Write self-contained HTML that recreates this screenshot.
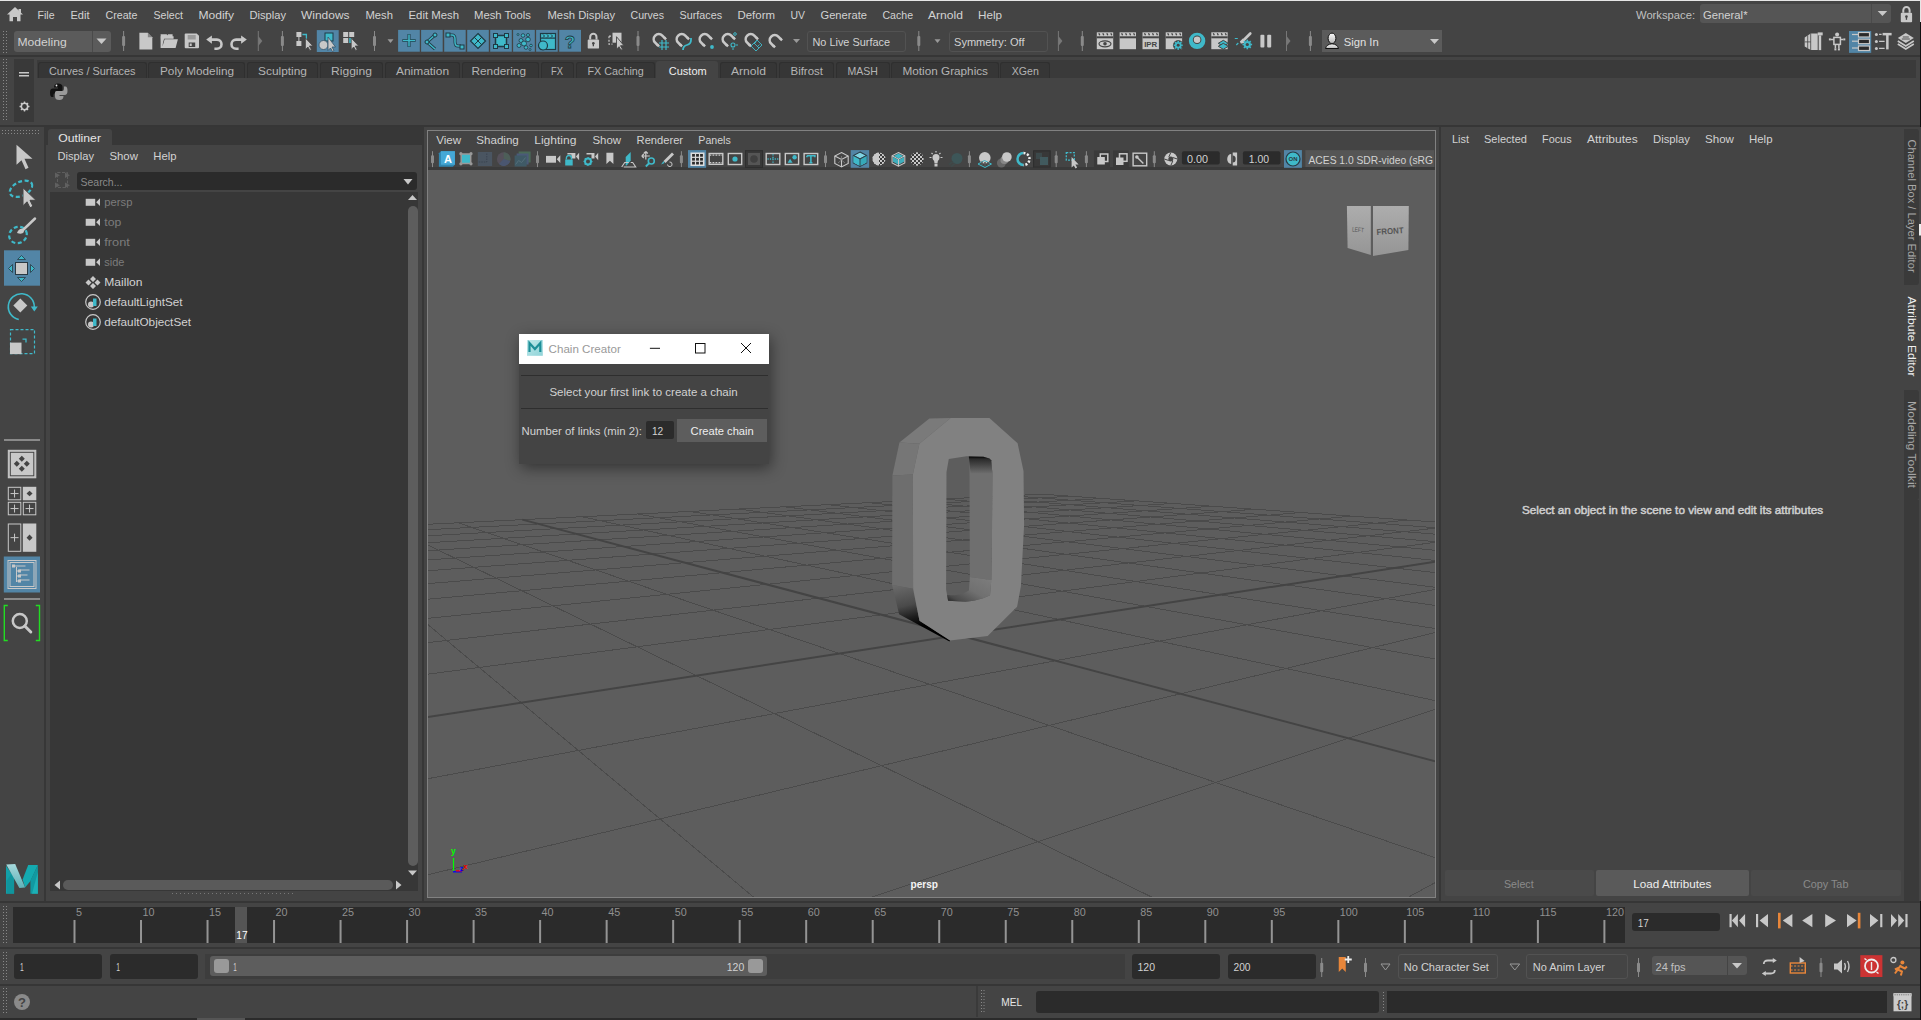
<!DOCTYPE html>
<html><head><meta charset="utf-8"><title>Maya</title>
<style>
html,body{margin:0;padding:0;}
body{width:1921px;height:1020px;overflow:hidden;background:#444;position:relative;font-family:"Liberation Sans",sans-serif;}
#bg>div{position:absolute;}
svg{position:absolute;left:0;top:0;}
svg text{font-family:"Liberation Sans",sans-serif;white-space:pre;}
</style></head><body>
<div id="bg">
<div style="left:0px;top:0px;width:1921px;height:1px;background:#e6e6e6;"></div>
<div style="left:0px;top:55px;width:1921px;height:2px;background:#363636;"></div>
<div style="left:0px;top:125px;width:1921px;height:2px;background:#363636;"></div>
<div style="left:44px;top:127px;width:2px;height:774px;background:#373737;"></div>
<div style="left:46px;top:127px;width:376px;height:18px;background:#373737;"></div>
<div style="left:48px;top:129px;width:64px;height:16px;background:#444444;border-radius:3px 3px 0 0"></div>
<div style="left:422px;top:127px;width:2px;height:774px;background:#373737;"></div>
<div style="left:1439px;top:127px;width:2px;height:774px;background:#373737;"></div>
<div style="left:0px;top:901px;width:1921px;height:2px;background:#363636;"></div>
<div style="left:0px;top:947px;width:1921px;height:2px;background:#363636;"></div>
<div style="left:0px;top:984px;width:1921px;height:2px;background:#363636;"></div>
<div style="left:0px;top:1018px;width:1921px;height:903px;background:#2b2b2b;"></div>
<div style="left:197px;top:1018px;width:48px;height:2px;background:#555555;"></div>
<div style="left:1920px;top:22px;width:1px;height:202px;background:#111;"></div>
<div style="left:1920px;top:236px;width:1px;height:509px;background:#3a3a3a;"></div>
<div style="left:1920px;top:745px;width:1px;height:275px;background:#111;"></div>
<div style="left:1920px;top:0px;width:1px;height:22px;background:#e6e6e6;"></div>
<div style="left:77px;top:172px;width:340px;height:18px;background:#2b2b2b;border-radius:3px"></div>
<div style="left:50px;top:192px;width:368px;height:699px;background:#373737;"></div>
<div style="left:408px;top:206px;width:10px;height:660px;background:#5d5d5d;border-radius:5px"></div>
<div style="left:427px;top:130px;width:1009px;height:768px;background:#818181;"></div>
<div style="left:428px;top:131px;width:1007px;height:766px;background:#444444;"></div>
<div style="left:428px;top:167px;width:1007px;height:3px;background:#3a3a3a;"></div>
<div style="left:428px;top:170px;width:1007px;height:727px;background:#5d5d5d;"></div>
<div style="left:14px;top:59px;width:20px;height:63px;background:#393939;"></div>
<div style="left:37px;top:60px;width:1879px;height:18px;background:#3a3a3a;"></div>
<div style="left:13px;top:907px;width:1612px;height:36px;background:#2b2b2b;"></div>
<div style="left:235px;top:907px;width:12px;height:36px;background:#555555;"></div>
<div style="left:1632px;top:913px;width:88px;height:18px;background:#2b2b2b;border-radius:3px"></div>
<div style="left:14px;top:954px;width:88px;height:25px;background:#2b2b2b;border-radius:3px"></div>
<div style="left:110px;top:954px;width:88px;height:25px;background:#2b2b2b;border-radius:3px"></div>
<div style="left:205px;top:954px;width:920px;height:25px;background:#3d3d3d;"></div>
<div style="left:210px;top:956px;width:557px;height:20px;background:#5d5d5d;border-radius:3px"></div>
<div style="left:214px;top:959px;width:15px;height:14px;background:#999999;border-radius:3px"></div>
<div style="left:748px;top:959px;width:15px;height:14px;background:#999999;border-radius:3px"></div>
<div style="left:1132px;top:954px;width:88px;height:25px;background:#2b2b2b;border-radius:3px"></div>
<div style="left:1228px;top:954px;width:88px;height:25px;background:#2b2b2b;border-radius:3px"></div>
<div style="left:1398px;top:954px;width:100px;height:25px;background:#444;border:1px solid #525252;border-radius:3px;box-sizing:border-box"></div>
<div style="left:1526px;top:954px;width:102px;height:25px;background:#444;border:1px solid #525252;border-radius:3px;box-sizing:border-box"></div>
<div style="left:1652px;top:956px;width:95px;height:19px;background:#555555;border-radius:3px"></div>
<div style="left:1727px;top:956px;width:1px;height:19px;background:#444;"></div>
<div style="left:976px;top:986px;width:2px;height:31px;background:#3a3a3a;"></div>
<div style="left:1036px;top:991px;width:343px;height:22px;background:#2b2b2b;border-radius:3px"></div>
<div style="left:1387px;top:991px;width:500px;height:22px;background:#2b2b2b;"></div>
<div style="left:1445px;top:870px;width:149px;height:26px;background:#4a4a4a;border-radius:2px"></div>
<div style="left:1596px;top:870px;width:153px;height:26px;background:#5a5a5a;border-radius:2px"></div>
<div style="left:1751px;top:870px;width:150px;height:26px;background:#4a4a4a;border-radius:2px"></div>
<div style="left:1904px;top:127px;width:17px;height:774px;background:#444444;"></div>
<div style="left:1904px;top:129px;width:15px;height:156px;background:#3a3a3a;border-radius:0 3px 3px 0"></div>
<div style="left:1904px;top:390px;width:15px;height:110px;background:#3a3a3a;border-radius:0 3px 3px 0"></div>
<div style="left:1904px;top:500px;width:15px;height:401px;background:#3a3a3a;"></div>
<div style="left:14px;top:31px;width:97px;height:21px;background:#5b5b5b;border-radius:3px"></div>
<div style="left:92px;top:31px;width:1px;height:21px;background:#4a4a4a;"></div>
<div style="left:807px;top:31px;width:99px;height:21px;background:#444;border:1px solid #525252;border-radius:3px;box-sizing:border-box"></div>
<div style="left:949px;top:31px;width:99px;height:21px;background:#444;border:1px solid #525252;border-radius:3px;box-sizing:border-box"></div>
<div style="left:1322px;top:30px;width:120px;height:22px;background:#5b5b5b;"></div>
<div style="left:1700px;top:4px;width:191px;height:19px;background:#555555;border-radius:3px"></div>
<div style="left:1871px;top:4px;width:1px;height:19px;background:#4a4a4a;"></div>
<div style="left:37.5px;top:62px;width:109.5px;height:16px;background:#363636;border:1px solid #2f2f2f;border-bottom:none;border-radius:3px 3px 0 0;box-sizing:border-box"></div>
<div style="left:148px;top:62px;width:97px;height:16px;background:#363636;border:1px solid #2f2f2f;border-bottom:none;border-radius:3px 3px 0 0;box-sizing:border-box"></div>
<div style="left:247px;top:62px;width:71px;height:16px;background:#363636;border:1px solid #2f2f2f;border-bottom:none;border-radius:3px 3px 0 0;box-sizing:border-box"></div>
<div style="left:320px;top:62px;width:63px;height:16px;background:#363636;border:1px solid #2f2f2f;border-bottom:none;border-radius:3px 3px 0 0;box-sizing:border-box"></div>
<div style="left:385px;top:62px;width:75px;height:16px;background:#363636;border:1px solid #2f2f2f;border-bottom:none;border-radius:3px 3px 0 0;box-sizing:border-box"></div>
<div style="left:462px;top:62px;width:77px;height:16px;background:#363636;border:1px solid #2f2f2f;border-bottom:none;border-radius:3px 3px 0 0;box-sizing:border-box"></div>
<div style="left:541px;top:62px;width:33px;height:16px;background:#363636;border:1px solid #2f2f2f;border-bottom:none;border-radius:3px 3px 0 0;box-sizing:border-box"></div>
<div style="left:576px;top:62px;width:79px;height:16px;background:#363636;border:1px solid #2f2f2f;border-bottom:none;border-radius:3px 3px 0 0;box-sizing:border-box"></div>
<div style="left:656px;top:61px;width:62px;height:17px;background:#444;border-radius:3px 3px 0 0"></div>
<div style="left:720px;top:62px;width:57px;height:16px;background:#363636;border:1px solid #2f2f2f;border-bottom:none;border-radius:3px 3px 0 0;box-sizing:border-box"></div>
<div style="left:779px;top:62px;width:55px;height:16px;background:#363636;border:1px solid #2f2f2f;border-bottom:none;border-radius:3px 3px 0 0;box-sizing:border-box"></div>
<div style="left:836px;top:62px;width:54px;height:16px;background:#363636;border:1px solid #2f2f2f;border-bottom:none;border-radius:3px 3px 0 0;box-sizing:border-box"></div>
<div style="left:891px;top:62px;width:108px;height:16px;background:#363636;border:1px solid #2f2f2f;border-bottom:none;border-radius:3px 3px 0 0;box-sizing:border-box"></div>
<div style="left:1000px;top:62px;width:50px;height:16px;background:#363636;border:1px solid #2f2f2f;border-bottom:none;border-radius:3px 3px 0 0;box-sizing:border-box"></div>
<div style="left:4px;top:439px;width:36px;height:2px;background:#8a8a8a;"></div>
<div style="left:4px;top:598px;width:36px;height:2px;background:#8a8a8a;"></div>
</div>
<svg width="1921" height="1020" viewBox="0 0 1921 1020" style="left:0;top:0">
<defs><clipPath id="vp"><rect x="428" y="170" width="1007" height="727"/></clipPath></defs>
<g clip-path="url(#vp)">
<g stroke="#4b4b4b" stroke-width="1" shape-rendering="crispEdges"><line x1="-773.08" y1="583.12" x2="-185562.51" y2="28774.00"/><line x1="-773.08" y1="583.12" x2="1042.15" y2="494.17"/><line x1="-595.64" y1="574.42" x2="-161159.01" y2="28774.00"/><line x1="-862.12" y1="596.70" x2="1071.42" y2="496.25"/><line x1="-437.83" y1="566.69" x2="-136755.51" y2="28774.00"/><line x1="-969.09" y1="613.02" x2="1102.80" y2="498.47"/><line x1="-296.55" y1="559.77" x2="-112352.00" y2="28774.00"/><line x1="-1099.99" y1="632.99" x2="1136.53" y2="500.86"/><line x1="-169.33" y1="553.53" x2="-87948.50" y2="28774.00"/><line x1="-1263.89" y1="657.99" x2="1172.88" y2="503.44"/><line x1="-54.18" y1="547.89" x2="-63545.00" y2="28774.00"/><line x1="-1475.04" y1="690.21" x2="1212.17" y2="506.22"/><line x1="50.54" y1="542.76" x2="-39141.50" y2="28774.00"/><line x1="-1757.33" y1="733.27" x2="1254.77" y2="509.24"/><line x1="146.19" y1="538.07" x2="-14738.00" y2="28774.00"/><line x1="-2153.98" y1="793.78" x2="1301.11" y2="512.53"/><line x1="233.90" y1="533.78" x2="9665.50" y2="28774.00"/><line x1="-2752.16" y1="885.04" x2="1351.72" y2="516.11"/><line x1="314.62" y1="529.82" x2="34069.00" y2="28774.00"/><line x1="-3757.75" y1="1038.45" x2="1407.21" y2="520.04"/><line x1="389.15" y1="526.17" x2="58472.50" y2="28774.00"/><line x1="-5801.89" y1="1350.30" x2="1468.31" y2="524.37"/><line x1="458.18" y1="522.79" x2="82876.00" y2="28774.00"/><line x1="-12211.44" y1="2328.12" x2="1535.94" y2="529.17"/><line x1="581.99" y1="516.72" x2="131683.00" y2="28774.00"/><line x1="-148524.72" y1="28774.00" x2="1695.43" y2="540.47"/><line x1="637.73" y1="513.99" x2="156086.50" y2="28774.00"/><line x1="-115633.18" y1="28774.00" x2="1790.37" y2="547.20"/><line x1="689.88" y1="511.43" x2="180490.00" y2="28774.00"/><line x1="-82741.65" y1="28774.00" x2="1898.19" y2="554.84"/><line x1="738.78" y1="509.04" x2="204893.50" y2="28774.00"/><line x1="-49850.11" y1="28774.00" x2="2021.70" y2="563.59"/><line x1="784.72" y1="506.79" x2="26290.87" y2="3661.93"/><line x1="-16958.58" y1="28774.00" x2="2164.60" y2="573.71"/><line x1="827.97" y1="504.67" x2="12484.13" y2="1807.74"/><line x1="15932.96" y1="28774.00" x2="2331.84" y2="585.57"/><line x1="868.75" y1="502.67" x2="8753.13" y2="1306.69"/><line x1="48824.50" y1="28774.00" x2="2530.20" y2="599.62"/><line x1="907.27" y1="500.78" x2="7017.00" y2="1073.53"/><line x1="81716.03" y1="28774.00" x2="2769.29" y2="616.56"/><line x1="943.72" y1="499.00" x2="6013.32" y2="938.74"/><line x1="114607.57" y1="28774.00" x2="3063.07" y2="637.38"/><line x1="978.25" y1="497.30" x2="5359.32" y2="850.91"/><line x1="147499.10" y1="28774.00" x2="3432.73" y2="663.58"/><line x1="1011.02" y1="495.70" x2="4899.37" y2="789.14"/><line x1="180390.64" y1="28774.00" x2="3912.04" y2="697.54"/><line x1="1042.15" y1="494.17" x2="4558.26" y2="743.34"/><line x1="213282.17" y1="28774.00" x2="4558.26" y2="743.34"/></g>
<g stroke="#444444" stroke-width="2"><line x1="522.29" y1="519.65" x2="107279.50" y2="28774.00"/><line x1="-181416.26" y1="28774.00" x2="1611.19" y2="534.50"/></g>
<defs>
<linearGradient id="gShadow" x1="0" y1="0" x2="0.25" y2="1">
 <stop offset="0" stop-color="#6c6c6c"/><stop offset="0.4" stop-color="#4a4a4a"/><stop offset="0.62" stop-color="#1c1c1c"/><stop offset="0.8" stop-color="#000"/><stop offset="1" stop-color="#000"/></linearGradient>
<linearGradient id="gTopIn" x1="0" y1="0" x2="0" y2="1">
 <stop offset="0" stop-color="#000"/><stop offset="0.15" stop-color="#2a2a2a"/><stop offset="1" stop-color="#6c6c6c"/></linearGradient>
<linearGradient id="gBotIn" x1="1" y1="0" x2="0" y2="1">
 <stop offset="0" stop-color="#7e7e7e"/><stop offset="0.5" stop-color="#707070"/><stop offset="0.85" stop-color="#4a4a4a"/><stop offset="1" stop-color="#222"/></linearGradient>
</defs>
<polygon points="929.4,418.5 950.6,417.9 919.4,443.8 899.4,442.6" fill="#7a7a7a" />
<polygon points="899.4,442.6 919.4,443.8 912.9,474.4 892.4,475.6" fill="#767676" />
<polygon points="892.4,475.6 912.9,474.4 913.1,588.8 892.1,585.0" fill="#6e6e6e" />
<polygon points="892.1,585.0 913.1,588.8 919.5,620.7 950.1,640.5 949.5,641.5 899.1,614.3" fill="url(#gShadow)" />
<path d="M950.6,417.9 L989.4,417.9 L1017.6,443.2 L1023.5,470.9 L1024.1,525.0 L1020.9,586.3 L1017.1,606.7 L987.7,636.0 L950.1,640.5 L919.5,620.7 L913.1,588.8 L912.9,474.4 L919.4,443.8 Z M948.8,459.1 L966.5,456.2 L983.5,456.8 L989.4,458.5 L991.2,460.3 L992.4,473.2 L991.7,560.0 L991.0,583.5 L990.0,595.3 L983.1,598.2 L973.8,600.7 L965.5,601.7 L948.1,600.7 L947.1,595.3 L946.1,589.4 L946.5,472.0 Z" fill="#818181" fill-rule="evenodd"/>
<polygon points="969.4,458.5 989.4,458.5 991.2,460.3 992.4,473.2 991.7,580.1 969.9,576.9" fill="#6f6f6f" />
<polygon points="968.8,456.4 983.5,456.8 989.4,458.5 991.2,460.3 992.4,473.2 970.6,473.2" fill="url(#gTopIn)" />
<polygon points="969.9,576.9 991.7,580.1 991.0,583.5 990.0,595.3 983.1,598.2 973.8,600.7 965.5,601.7 948.1,600.7 947.1,595.3 954.7,595.3 963.0,593.8 968.9,590.4" fill="url(#gBotIn)" />
</g>
<defs><linearGradient id="vc2" x1="0" y1="0" x2="0" y2="1"><stop offset="0" stop-color="#adadad"/><stop offset="1" stop-color="#959595"/></linearGradient></defs>
<path d="M1346.9,206.1 L1370.8,206.1 L1370.8,255.1 L1347.6,248Z" fill="url(#vc2)"/><path d="M1373,206.1 L1408.8,206.1 L1408.4,250 L1373,255.9Z" fill="url(#vc2)"/>
<text x="1352" y="232" font-size="6.5" fill="#555" transform="rotate(4 1358 230)" textLength="12" lengthAdjust="spacingAndGlyphs">LEFT</text>
<text x="1376.5" y="234" font-size="8.5" font-weight="bold" fill="#555" transform="rotate(-4 1390 231)" textLength="27" lengthAdjust="spacingAndGlyphs">FRONT</text>
<path d="M453.5,858 V870.8" stroke="#00ff00" stroke-width="1.2"/><path d="M453,871.8 H462" stroke="#0000ff" stroke-width="1.3"/><path d="M456,870.9 H461.5 L463.5,869.5" stroke="#ff0000" stroke-width="1.1" fill="none"/><text x="451" y="854" font-size="8.5" font-weight="bold" fill="#00ff00">y</text><text x="459.8" y="870.8" font-size="7" font-weight="bold" fill="#0000ff">z</text><text x="463.3" y="869.3" font-size="7.5" font-weight="bold" fill="#ff0000">x</text>
</svg>
<div style="position:absolute;left:519px;top:334px;width:250px;height:130px;background:#444;box-shadow:2px 4px 14px rgba(0,0,0,0.45);"></div>
<div style="position:absolute;left:519px;top:334px;width:250px;height:30px;background:#ffffff;"></div>
<div style="position:absolute;left:521px;top:375px;width:247px;height:1px;background:#2e2e2e;"></div>
<div style="position:absolute;left:521px;top:408px;width:247px;height:1px;background:#2e2e2e;"></div>
<div style="position:absolute;left:646px;top:421px;width:28px;height:18px;background:#2b2b2b;border-radius:2px"></div>
<div style="position:absolute;left:677px;top:419px;width:90px;height:23px;background:#5d5d5d;"></div>
<svg width="1921" height="1020" viewBox="0 0 1921 1020" style="left:0;top:0">
<text x="37.50" y="19" font-size="11.2" fill="#d2d2d2" font-weight="normal" textLength="17.01" lengthAdjust="spacingAndGlyphs">File</text>
<text x="70.50" y="19" font-size="11.2" fill="#d2d2d2" font-weight="normal" textLength="18.98" lengthAdjust="spacingAndGlyphs">Edit</text>
<text x="105.50" y="19" font-size="11.2" fill="#d2d2d2" font-weight="normal" textLength="32.02" lengthAdjust="spacingAndGlyphs">Create</text>
<text x="153.50" y="19" font-size="11.2" fill="#d2d2d2" font-weight="normal" textLength="29.49" lengthAdjust="spacingAndGlyphs">Select</text>
<text x="198.50" y="19" font-size="11.2" fill="#d2d2d2" font-weight="normal" textLength="35.50" lengthAdjust="spacingAndGlyphs">Modify</text>
<text x="249.50" y="19" font-size="11.2" fill="#d2d2d2" font-weight="normal" textLength="36.49" lengthAdjust="spacingAndGlyphs">Display</text>
<text x="301.00" y="19" font-size="11.2" fill="#d2d2d2" font-weight="normal" textLength="48.52" lengthAdjust="spacingAndGlyphs">Windows</text>
<text x="365.50" y="19" font-size="11.2" fill="#d2d2d2" font-weight="normal" textLength="27.50" lengthAdjust="spacingAndGlyphs">Mesh</text>
<text x="408.50" y="19" font-size="11.2" fill="#d2d2d2" font-weight="normal" textLength="50.52" lengthAdjust="spacingAndGlyphs">Edit Mesh</text>
<text x="474.00" y="19" font-size="11.2" fill="#d2d2d2" font-weight="normal" textLength="57.00" lengthAdjust="spacingAndGlyphs">Mesh Tools</text>
<text x="547.50" y="19" font-size="11.2" fill="#d2d2d2" font-weight="normal" textLength="67.52" lengthAdjust="spacingAndGlyphs">Mesh Display</text>
<text x="630.50" y="19" font-size="11.2" fill="#d2d2d2" font-weight="normal" textLength="33.47" lengthAdjust="spacingAndGlyphs">Curves</text>
<text x="679.50" y="19" font-size="11.2" fill="#d2d2d2" font-weight="normal" textLength="42.52" lengthAdjust="spacingAndGlyphs">Surfaces</text>
<text x="737.50" y="19" font-size="11.2" fill="#d2d2d2" font-weight="normal" textLength="37.48" lengthAdjust="spacingAndGlyphs">Deform</text>
<text x="790.50" y="19" font-size="11.2" fill="#d2d2d2" font-weight="normal" textLength="14.49" lengthAdjust="spacingAndGlyphs">UV</text>
<text x="820.50" y="19" font-size="11.2" fill="#d2d2d2" font-weight="normal" textLength="46.49" lengthAdjust="spacingAndGlyphs">Generate</text>
<text x="882.50" y="19" font-size="11.2" fill="#d2d2d2" font-weight="normal" textLength="30.51" lengthAdjust="spacingAndGlyphs">Cache</text>
<text x="928.00" y="19" font-size="11.2" fill="#d2d2d2" font-weight="normal" textLength="35.01" lengthAdjust="spacingAndGlyphs">Arnold</text>
<text x="978.00" y="19" font-size="11.2" fill="#d2d2d2" font-weight="normal" textLength="24.02" lengthAdjust="spacingAndGlyphs">Help</text>
<text x="1636.00" y="19" font-size="11.2" fill="#c0c0c0" font-weight="normal" textLength="59.01" lengthAdjust="spacingAndGlyphs">Workspace:</text>
<text x="1703.00" y="19" font-size="11.2" fill="#d2d2d2" font-weight="normal" textLength="44.52" lengthAdjust="spacingAndGlyphs">General*</text>
<text x="17.50" y="46" font-size="11.2" fill="#d2d2d2" font-weight="normal" textLength="49.23" lengthAdjust="spacingAndGlyphs">Modeling</text>
<text x="812.50" y="46" font-size="11.2" fill="#d2d2d2" font-weight="normal" textLength="77.50" lengthAdjust="spacingAndGlyphs">No Live Surface</text>
<text x="954.00" y="46" font-size="11.2" fill="#d2d2d2" font-weight="normal" textLength="70.46" lengthAdjust="spacingAndGlyphs">Symmetry: Off</text>
<text x="1343.75" y="46" font-size="11.2" fill="#e0e0e0" font-weight="normal" textLength="34.98" lengthAdjust="spacingAndGlyphs">Sign In</text>
<text x="49.00" y="75" font-size="11.2" fill="#b4b4b4" font-weight="normal" textLength="86.53" lengthAdjust="spacingAndGlyphs">Curves / Surfaces</text>
<text x="160.00" y="75" font-size="11.2" fill="#b4b4b4" font-weight="normal" textLength="74.02" lengthAdjust="spacingAndGlyphs">Poly Modeling</text>
<text x="258.00" y="75" font-size="11.2" fill="#b4b4b4" font-weight="normal" textLength="48.99" lengthAdjust="spacingAndGlyphs">Sculpting</text>
<text x="331.00" y="75" font-size="11.2" fill="#b4b4b4" font-weight="normal" textLength="41.02" lengthAdjust="spacingAndGlyphs">Rigging</text>
<text x="396.00" y="75" font-size="11.2" fill="#b4b4b4" font-weight="normal" textLength="53.02" lengthAdjust="spacingAndGlyphs">Animation</text>
<text x="471.50" y="75" font-size="11.2" fill="#b4b4b4" font-weight="normal" textLength="54.49" lengthAdjust="spacingAndGlyphs">Rendering</text>
<text x="551.00" y="75" font-size="11.2" fill="#b4b4b4" font-weight="normal" textLength="11.98" lengthAdjust="spacingAndGlyphs">FX</text>
<text x="587.50" y="75" font-size="11.2" fill="#b4b4b4" font-weight="normal" textLength="56.25" lengthAdjust="spacingAndGlyphs">FX Caching</text>
<text x="668.75" y="75" font-size="11.2" fill="#eeeeee" font-weight="normal" textLength="38.00" lengthAdjust="spacingAndGlyphs">Custom</text>
<text x="731.00" y="75" font-size="11.2" fill="#b4b4b4" font-weight="normal" textLength="35.01" lengthAdjust="spacingAndGlyphs">Arnold</text>
<text x="790.50" y="75" font-size="11.2" fill="#b4b4b4" font-weight="normal" textLength="32.49" lengthAdjust="spacingAndGlyphs">Bifrost</text>
<text x="847.50" y="75" font-size="11.2" fill="#b4b4b4" font-weight="normal" textLength="30.49" lengthAdjust="spacingAndGlyphs">MASH</text>
<text x="902.50" y="75" font-size="11.2" fill="#b4b4b4" font-weight="normal" textLength="85.51" lengthAdjust="spacingAndGlyphs">Motion Graphics</text>
<text x="1011.75" y="75" font-size="11.2" fill="#b4b4b4" font-weight="normal" textLength="27.02" lengthAdjust="spacingAndGlyphs">XGen</text>
<text x="58.20" y="142" font-size="11.2" fill="#e6e6e6" font-weight="normal" textLength="42.82" lengthAdjust="spacingAndGlyphs">Outliner</text>
<text x="57.50" y="160" font-size="11.2" fill="#d2d2d2" font-weight="normal" textLength="36.49" lengthAdjust="spacingAndGlyphs">Display</text>
<text x="109.40" y="160" font-size="11.2" fill="#d2d2d2" font-weight="normal" textLength="28.56" lengthAdjust="spacingAndGlyphs">Show</text>
<text x="153.30" y="160" font-size="11.2" fill="#d2d2d2" font-weight="normal" textLength="23.22" lengthAdjust="spacingAndGlyphs">Help</text>
<text x="80.50" y="186" font-size="11.2" fill="#8a8a8a" font-weight="normal" textLength="41.92" lengthAdjust="spacingAndGlyphs">Search...</text>
<text x="104.30" y="206" font-size="11.2" fill="#7c7c7c" font-weight="normal" textLength="28.12" lengthAdjust="spacingAndGlyphs">persp</text>
<text x="104.30" y="226" font-size="11.2" fill="#7c7c7c" font-weight="normal" textLength="17.00" lengthAdjust="spacingAndGlyphs">top</text>
<text x="104.30" y="246" font-size="11.2" fill="#7c7c7c" font-weight="normal" textLength="25.61" lengthAdjust="spacingAndGlyphs">front</text>
<text x="104.30" y="266" font-size="11.2" fill="#7c7c7c" font-weight="normal" textLength="20.19" lengthAdjust="spacingAndGlyphs">side</text>
<text x="104.30" y="286" font-size="11.2" fill="#d2d2d2" font-weight="normal" textLength="38.18" lengthAdjust="spacingAndGlyphs">Maillon</text>
<text x="104.30" y="306" font-size="11.2" fill="#d2d2d2" font-weight="normal" textLength="78.32" lengthAdjust="spacingAndGlyphs">defaultLightSet</text>
<text x="104.30" y="326" font-size="11.2" fill="#d2d2d2" font-weight="normal" textLength="86.68" lengthAdjust="spacingAndGlyphs">defaultObjectSet</text>
<text x="436.20" y="144" font-size="11.2" fill="#d2d2d2" font-weight="normal" textLength="24.89" lengthAdjust="spacingAndGlyphs">View</text>
<text x="476.30" y="144" font-size="11.2" fill="#d2d2d2" font-weight="normal" textLength="42.50" lengthAdjust="spacingAndGlyphs">Shading</text>
<text x="534.20" y="144" font-size="11.2" fill="#d2d2d2" font-weight="normal" textLength="42.28" lengthAdjust="spacingAndGlyphs">Lighting</text>
<text x="592.40" y="144" font-size="11.2" fill="#d2d2d2" font-weight="normal" textLength="28.66" lengthAdjust="spacingAndGlyphs">Show</text>
<text x="636.60" y="144" font-size="11.2" fill="#d2d2d2" font-weight="normal" textLength="46.49" lengthAdjust="spacingAndGlyphs">Renderer</text>
<text x="698.30" y="144" font-size="11.2" fill="#d2d2d2" font-weight="normal" textLength="32.48" lengthAdjust="spacingAndGlyphs">Panels</text>
<text x="910.50" y="888" font-size="10" fill="#f4f4f4" font-weight="bold" textLength="27.48" lengthAdjust="spacingAndGlyphs">persp</text>
<text x="1452.00" y="143" font-size="11.2" fill="#d2d2d2" font-weight="normal" textLength="17.01" lengthAdjust="spacingAndGlyphs">List</text>
<text x="1484.00" y="143" font-size="11.2" fill="#d2d2d2" font-weight="normal" textLength="42.92" lengthAdjust="spacingAndGlyphs">Selected</text>
<text x="1542.00" y="143" font-size="11.2" fill="#d2d2d2" font-weight="normal" textLength="29.58" lengthAdjust="spacingAndGlyphs">Focus</text>
<text x="1587.00" y="143" font-size="11.2" fill="#d2d2d2" font-weight="normal" textLength="50.69" lengthAdjust="spacingAndGlyphs">Attributes</text>
<text x="1653.00" y="143" font-size="11.2" fill="#d2d2d2" font-weight="normal" textLength="36.99" lengthAdjust="spacingAndGlyphs">Display</text>
<text x="1705.00" y="143" font-size="11.2" fill="#d2d2d2" font-weight="normal" textLength="28.96" lengthAdjust="spacingAndGlyphs">Show</text>
<text x="1749.00" y="143" font-size="11.2" fill="#d2d2d2" font-weight="normal" textLength="23.52" lengthAdjust="spacingAndGlyphs">Help</text>
<text x="1522.00" y="514" font-size="11" fill="#d0d0d0" font-weight="normal" textLength="301.02" lengthAdjust="spacingAndGlyphs" stroke="#d0d0d0" stroke-width="0.45">Select an object in the scene to view and edit its attributes</text>
<text x="1504.00" y="888" font-size="11.2" fill="#8a8a8a" font-weight="normal" textLength="29.59" lengthAdjust="spacingAndGlyphs">Select</text>
<text x="1633.30" y="888" font-size="11.2" fill="#eeeeee" font-weight="normal" textLength="78.02" lengthAdjust="spacingAndGlyphs">Load Attributes</text>
<text x="1802.90" y="888" font-size="11.2" fill="#8a8a8a" font-weight="normal" textLength="45.52" lengthAdjust="spacingAndGlyphs">Copy Tab</text>
<rect x="73.5" y="920" width="2.0" height="23" fill="#949494" />
<text x="76.00" y="916" font-size="10.8" fill="#909090" font-weight="normal" textLength="6.01" lengthAdjust="spacingAndGlyphs">5</text>
<rect x="140.01739130434783" y="920" width="2.0" height="23" fill="#949494" />
<text x="142.52" y="916" font-size="10.8" fill="#909090" font-weight="normal" textLength="12.01" lengthAdjust="spacingAndGlyphs">10</text>
<rect x="206.53478260869565" y="920" width="2.0" height="23" fill="#949494" />
<text x="209.03" y="916" font-size="10.8" fill="#909090" font-weight="normal" textLength="12.01" lengthAdjust="spacingAndGlyphs">15</text>
<rect x="273.0521739130435" y="920" width="2.0" height="23" fill="#949494" />
<text x="275.55" y="916" font-size="10.8" fill="#909090" font-weight="normal" textLength="12.01" lengthAdjust="spacingAndGlyphs">20</text>
<rect x="339.5695652173913" y="920" width="2.0" height="23" fill="#949494" />
<text x="342.07" y="916" font-size="10.8" fill="#909090" font-weight="normal" textLength="12.01" lengthAdjust="spacingAndGlyphs">25</text>
<rect x="406.0869565217391" y="920" width="2.0" height="23" fill="#949494" />
<text x="408.59" y="916" font-size="10.8" fill="#909090" font-weight="normal" textLength="12.01" lengthAdjust="spacingAndGlyphs">30</text>
<rect x="472.604347826087" y="920" width="2.0" height="23" fill="#949494" />
<text x="475.10" y="916" font-size="10.8" fill="#909090" font-weight="normal" textLength="12.01" lengthAdjust="spacingAndGlyphs">35</text>
<rect x="539.1217391304349" y="920" width="2.0" height="23" fill="#949494" />
<text x="541.62" y="916" font-size="10.8" fill="#909090" font-weight="normal" textLength="12.01" lengthAdjust="spacingAndGlyphs">40</text>
<rect x="605.6391304347826" y="920" width="2.0" height="23" fill="#949494" />
<text x="608.14" y="916" font-size="10.8" fill="#909090" font-weight="normal" textLength="12.01" lengthAdjust="spacingAndGlyphs">45</text>
<rect x="672.1565217391304" y="920" width="2.0" height="23" fill="#949494" />
<text x="674.66" y="916" font-size="10.8" fill="#909090" font-weight="normal" textLength="12.01" lengthAdjust="spacingAndGlyphs">50</text>
<rect x="738.6739130434783" y="920" width="2.0" height="23" fill="#949494" />
<text x="741.17" y="916" font-size="10.8" fill="#909090" font-weight="normal" textLength="12.01" lengthAdjust="spacingAndGlyphs">55</text>
<rect x="805.1913043478262" y="920" width="2.0" height="23" fill="#949494" />
<text x="807.69" y="916" font-size="10.8" fill="#909090" font-weight="normal" textLength="12.01" lengthAdjust="spacingAndGlyphs">60</text>
<rect x="871.708695652174" y="920" width="2.0" height="23" fill="#949494" />
<text x="874.21" y="916" font-size="10.8" fill="#909090" font-weight="normal" textLength="12.01" lengthAdjust="spacingAndGlyphs">65</text>
<rect x="938.2260869565218" y="920" width="2.0" height="23" fill="#949494" />
<text x="940.73" y="916" font-size="10.8" fill="#909090" font-weight="normal" textLength="12.01" lengthAdjust="spacingAndGlyphs">70</text>
<rect x="1004.7434782608697" y="920" width="2.0" height="23" fill="#949494" />
<text x="1007.24" y="916" font-size="10.8" fill="#909090" font-weight="normal" textLength="12.01" lengthAdjust="spacingAndGlyphs">75</text>
<rect x="1071.2608695652175" y="920" width="2.0" height="23" fill="#949494" />
<text x="1073.76" y="916" font-size="10.8" fill="#909090" font-weight="normal" textLength="12.01" lengthAdjust="spacingAndGlyphs">80</text>
<rect x="1137.7782608695652" y="920" width="2.0" height="23" fill="#949494" />
<text x="1140.28" y="916" font-size="10.8" fill="#909090" font-weight="normal" textLength="12.01" lengthAdjust="spacingAndGlyphs">85</text>
<rect x="1204.2956521739131" y="920" width="2.0" height="23" fill="#949494" />
<text x="1206.80" y="916" font-size="10.8" fill="#909090" font-weight="normal" textLength="12.01" lengthAdjust="spacingAndGlyphs">90</text>
<rect x="1270.8130434782609" y="920" width="2.0" height="23" fill="#949494" />
<text x="1273.31" y="916" font-size="10.8" fill="#909090" font-weight="normal" textLength="12.01" lengthAdjust="spacingAndGlyphs">95</text>
<rect x="1337.3304347826088" y="920" width="2.0" height="23" fill="#949494" />
<text x="1339.83" y="916" font-size="10.8" fill="#909090" font-weight="normal" textLength="18.02" lengthAdjust="spacingAndGlyphs">100</text>
<rect x="1403.8478260869565" y="920" width="2.0" height="23" fill="#949494" />
<text x="1406.35" y="916" font-size="10.8" fill="#909090" font-weight="normal" textLength="18.02" lengthAdjust="spacingAndGlyphs">105</text>
<rect x="1470.3652173913044" y="920" width="2.0" height="23" fill="#949494" />
<text x="1472.87" y="916" font-size="10.8" fill="#909090" font-weight="normal" textLength="17.22" lengthAdjust="spacingAndGlyphs">110</text>
<rect x="1536.8826086956524" y="920" width="2.0" height="23" fill="#949494" />
<text x="1539.38" y="916" font-size="10.8" fill="#909090" font-weight="normal" textLength="17.22" lengthAdjust="spacingAndGlyphs">115</text>
<rect x="1603.4" y="920" width="2.0" height="23" fill="#949494" />
<text x="1605.90" y="916" font-size="10.8" fill="#909090" font-weight="normal" textLength="18.02" lengthAdjust="spacingAndGlyphs">120</text>
<text x="236.25" y="939" font-size="10.8" fill="#ffffff" font-weight="normal" textLength="11.27" lengthAdjust="spacingAndGlyphs">17</text>
<text x="1637.70" y="927" font-size="11.2" fill="#d2d2d2" font-weight="normal" textLength="11.02" lengthAdjust="spacingAndGlyphs">17</text>
<text x="20.00" y="971" font-size="11.2" fill="#d2d2d2" font-weight="normal" textLength="3.76" lengthAdjust="spacingAndGlyphs">1</text>
<text x="116.25" y="971" font-size="11.2" fill="#d2d2d2" font-weight="normal" textLength="3.76" lengthAdjust="spacingAndGlyphs">1</text>
<text x="233.25" y="971" font-size="11.2" fill="#d2d2d2" font-weight="normal" textLength="3.51" lengthAdjust="spacingAndGlyphs">1</text>
<text x="726.75" y="971" font-size="11.2" fill="#d2d2d2" font-weight="normal" textLength="17.48" lengthAdjust="spacingAndGlyphs">120</text>
<text x="1137.50" y="971" font-size="11.2" fill="#d2d2d2" font-weight="normal" textLength="17.48" lengthAdjust="spacingAndGlyphs">120</text>
<text x="1233.50" y="971" font-size="11.2" fill="#d2d2d2" font-weight="normal" textLength="16.98" lengthAdjust="spacingAndGlyphs">200</text>
<text x="1403.75" y="971" font-size="11.2" fill="#d2d2d2" font-weight="normal" textLength="85.16" lengthAdjust="spacingAndGlyphs">No Character Set</text>
<text x="1532.70" y="971" font-size="11.2" fill="#d2d2d2" font-weight="normal" textLength="72.29" lengthAdjust="spacingAndGlyphs">No Anim Layer</text>
<text x="1655.50" y="971" font-size="11.2" fill="#c0c0c0" font-weight="normal" textLength="30.09" lengthAdjust="spacingAndGlyphs">24 fps</text>
<text x="1001.25" y="1006" font-size="11.2" fill="#e6e6e6" font-weight="normal" textLength="20.76" lengthAdjust="spacingAndGlyphs">MEL</text>
<text x="549.40" y="396" font-size="11.2" fill="#d2d2d2" font-weight="normal" textLength="188.31" lengthAdjust="spacingAndGlyphs">Select your first link to create a chain</text>
<text x="521.50" y="435" font-size="11.2" fill="#d2d2d2" font-weight="normal" textLength="120.49" lengthAdjust="spacingAndGlyphs">Number of links (min 2):</text>
<text x="651.90" y="435" font-size="11.2" fill="#d2d2d2" font-weight="normal" textLength="11.32" lengthAdjust="spacingAndGlyphs">12</text>
<text x="690.60" y="435" font-size="11.2" fill="#eeeeee" font-weight="normal" textLength="63.10" lengthAdjust="spacingAndGlyphs">Create chain</text>
<g transform="translate(7,7) scale(1)"><path d="M8,0 L16,7.5 L13.5,7.5 L13.5,14.3 L10,14.3 L10,10 L6,10 L6,14.3 L2.5,14.3 L2.5,7.5 L0,7.5Z" fill="#c8c8c8"/><rect x="11.5" y="2" width="2.5" height="4" fill="#c8c8c8"/></g>
<path d="M1877.7,10.9 L1887.2,10.9 L1882.45,16Z" fill="#c8c8c8"/>
<g transform="translate(1900.8,5.8) scale(1.000,1.000)"><path d="M2.5,7 V4.5 A3.15,3.4 0 0 1 8.8,4.5 V7" fill="none" stroke="#c8c8c8" stroke-width="2"/><rect x="0" y="7" width="11.3" height="9.4" rx="1" fill="#c8c8c8"/><circle cx="5.65" cy="10.8" r="1.3" fill="#444"/><rect x="5" y="11" width="1.3" height="3" fill="#444"/></g>
<rect x="3" y="31" width="1" height="1" fill="#888"/><rect x="6" y="31" width="1" height="1" fill="#888"/>
<rect x="3" y="34" width="1" height="1" fill="#888"/><rect x="6" y="34" width="1" height="1" fill="#888"/>
<rect x="3" y="37" width="1" height="1" fill="#888"/><rect x="6" y="37" width="1" height="1" fill="#888"/>
<rect x="3" y="40" width="1" height="1" fill="#888"/><rect x="6" y="40" width="1" height="1" fill="#888"/>
<rect x="3" y="43" width="1" height="1" fill="#888"/><rect x="6" y="43" width="1" height="1" fill="#888"/>
<rect x="3" y="46" width="1" height="1" fill="#888"/><rect x="6" y="46" width="1" height="1" fill="#888"/>
<rect x="3" y="49" width="1" height="1" fill="#888"/><rect x="6" y="49" width="1" height="1" fill="#888"/>
<rect x="3" y="52" width="1" height="1" fill="#888"/><rect x="6" y="52" width="1" height="1" fill="#888"/>
<path d="M96.5,38.5 L106.5,38.5 L101.5,44Z" fill="#c8c8c8"/>
<rect x="123.1" y="31" width="1" height="20" fill="#8a8a8a"/><rect x="122.1" y="36.0" width="3" height="10.0" rx="1" fill="#8a8a8a"/>
<g transform="translate(139.4,32.8) scale(1)"><path d="M0,0 H8.5 L12.9,4.5 V16.6 H0Z" fill="#c8c8c8"/><path d="M8.5,0 V4.5 H12.9" fill="#444" opacity="0.5"/></g>
<g transform="translate(160.6,34.3) scale(1)"><path d="M0,2 V13.6 H15 L17.3,5 H4 L2,12 V2 H6 L7.5,0 H12 V4" fill="#c8c8c8"/><path d="M0,0 H6 L7.5,2 H13 V4.5 H3.5 L0.8,13.6 Z" fill="#c8c8c8"/></g>
<g transform="translate(184.7,33.5) scale(1)"><path d="M0,1 Q0,0 1,0 H12 L14.3,2.3 V13.8 Q14.3,14.8 13.3,14.8 H1 Q0,14.8 0,13.8Z" fill="#c8c8c8"/><rect x="3" y="1.5" width="8" height="4.5" fill="#444" opacity="0.35"/><rect x="4" y="9" width="6.5" height="4.5" fill="#444"/><rect x="5" y="10" width="2" height="2.5" fill="#c8c8c8"/></g>
<g transform="translate(205.9,35.4) scale(1)"><path d="M0.3,4.2 L6,0 V8.4Z" fill="#c8c8c8"/><path d="M5,4.2 H11 A4.6,4.6 0 0 1 11,13.4 H8.5" fill="none" stroke="#c8c8c8" stroke-width="2.6"/></g>
<g transform="translate(229.7,35.4) scale(1)"><path d="M17.1,4.2 L11.4,0 V8.4Z" fill="#c8c8c8"/><path d="M12.4,4.2 H6.4 A4.6,4.6 0 0 0 6.4,13.4 H8.9" fill="none" stroke="#c8c8c8" stroke-width="2.6"/></g>
<rect x="257.8" y="31" width="1" height="20" fill="#777"/><path d="M258.3,36.0 L262.3,41.0 L258.3,46.0Z" fill="#777"/>
<rect x="281.9" y="31" width="1" height="20" fill="#8a8a8a"/><rect x="280.9" y="36.0" width="3" height="10.0" rx="1" fill="#8a8a8a"/>
<g transform="translate(296.4,32) scale(1)"><rect x="0" y="0" width="5" height="5" fill="#c8c8c8"/><rect x="0" y="9" width="5" height="5" fill="#c8c8c8"/><rect x="2" y="5" width="1" height="4" fill="#c8c8c8"/><path d="M6,2.5 H10 V7" fill="none" stroke="#3fb9c9" stroke-width="1.3"/><path d="M9,6 L9,17.5 L11.5,15 L13.5,18.5 L15,17.5 L13,14 L16.5,14Z" fill="#c8c8c8" stroke="#444" stroke-width="0.8"/></g>
<rect x="316.8" y="30.1" width="21.899999999999977" height="21.9" fill="#5285a6"/>
<g transform="translate(319,33) scale(1)"><rect x="6" y="0" width="8" height="8" fill="#3fb9c9" stroke="#1f3a44" stroke-width="1"/><circle cx="4.5" cy="12" r="4.5" fill="#c8c8c8" stroke="#35546a" stroke-width="0.8"/><path d="M9,4 L9,17.5 L11.5,15 L13.5,18.5 L15,17.5 L13,14 L16.5,14Z" fill="#c8c8c8" stroke="#35546a" stroke-width="0.8"/></g>
<g transform="translate(343.2,32) scale(1)"><rect x="0" y="0" width="5" height="5" fill="#c8c8c8"/><rect x="6" y="0" width="5" height="5" fill="#c8c8c8"/><rect x="0" y="6" width="5" height="5" fill="#c8c8c8"/><rect x="6" y="6" width="3" height="5" fill="#3fb9c9"/><path d="M8,6 L8,17.5 L10.5,15 L12.5,18.5 L14,17.5 L12,14 L15.5,14Z" fill="#c8c8c8" stroke="#444" stroke-width="0.8"/></g>
<rect x="374.0" y="31" width="1" height="20" fill="#8a8a8a"/><rect x="373.0" y="36.0" width="3" height="10.0" rx="1" fill="#8a8a8a"/>
<path d="M387.5,39.3 L393.5,39.3 L390.5,42.9Z" fill="#999"/>
<rect x="398.1" y="29.9" width="21.69999999999999" height="21.800000000000004" fill="#5285a6"/>
<rect x="421.1" y="29.9" width="21.599999999999966" height="21.800000000000004" fill="#5285a6"/>
<rect x="444.2" y="29.9" width="21.5" height="21.800000000000004" fill="#5285a6"/>
<rect x="467.2" y="29.9" width="21.600000000000023" height="21.800000000000004" fill="#5285a6"/>
<rect x="490.2" y="29.9" width="21.600000000000023" height="21.800000000000004" fill="#5285a6"/>
<rect x="513.1" y="29.9" width="21.699999999999932" height="21.800000000000004" fill="#5285a6"/>
<rect x="536.1" y="29.9" width="21.600000000000023" height="21.800000000000004" fill="#5285a6"/>
<rect x="559.2" y="29.9" width="21.799999999999955" height="21.800000000000004" fill="#5285a6"/>
<g transform="translate(402,34) scale(1)"><path d="M7,0 V13 M0.5,6.5 H13.5" stroke="#1f3a44" stroke-width="3"/><path d="M7,0.5 V12.5 M1,6.5 H13" stroke="#3fb9c9" stroke-width="1.5"/></g>
<g transform="translate(425,33) scale(1)"><path d="M10,2 L2,9 L10,16" fill="none" stroke="#1f3a44" stroke-width="3"/><path d="M10,2 L2,9 L10,16" fill="none" stroke="#3fb9c9" stroke-width="1.5"/><circle cx="10" cy="2" r="2" fill="#3fb9c9" stroke="#1f3a44"/><circle cx="2" cy="9" r="2" fill="#3fb9c9" stroke="#1f3a44"/></g>
<g transform="translate(446,33) scale(1)"><path d="M2,2 H6 Q9,2 9,6 V9 Q9,13 12,13 H15" fill="none" stroke="#1f3a44" stroke-width="3"/><path d="M2,2 H6 Q9,2 9,6 V9 Q9,13 12,13 H15" fill="none" stroke="#3fb9c9" stroke-width="1.5"/><rect x="0" y="0" width="4" height="4" fill="#3fb9c9" stroke="#1f3a44"/><rect x="14" y="12" width="4" height="4" fill="#3fb9c9" stroke="#1f3a44"/></g>
<g transform="translate(470.5,33.5) scale(1)"><path d="M7.5,0 L15,7.5 L7.5,15 L0,7.5Z" fill="#3fb9c9" stroke="#1f3a44" stroke-width="1.2"/><path d="M3.75,3.75 L11.25,11.25 M11.25,3.75 L3.75,11.25" stroke="#1f3a44" stroke-width="1"/></g>
<g transform="translate(493.5,33.5) scale(1)"><rect x="2" y="2" width="11" height="11" fill="#3fb9c9" stroke="#1f3a44" stroke-width="1.5"/><rect x="0" y="0" width="4" height="4" fill="#3fb9c9" stroke="#1f3a44"/><rect x="11" y="0" width="4" height="4" fill="#3fb9c9" stroke="#1f3a44"/><rect x="0" y="11" width="4" height="4" fill="#3fb9c9" stroke="#1f3a44"/><rect x="11" y="11" width="4" height="4" fill="#3fb9c9" stroke="#1f3a44"/></g>
<g transform="translate(516,33.5) scale(1)"><circle cx="2" cy="1" r="1" fill="#3fb9c9" stroke="#1f3a44" stroke-width="0.8"/><circle cx="7" cy="2" r="1.8" fill="#3fb9c9" stroke="#1f3a44" stroke-width="0.8"/><circle cx="12" cy="1.5" r="1.5" fill="#3fb9c9" stroke="#1f3a44" stroke-width="0.8"/><circle cx="5" cy="7" r="2" fill="#3fb9c9" stroke="#1f3a44" stroke-width="0.8"/><circle cx="12" cy="6" r="2.3" fill="#3fb9c9" stroke="#1f3a44" stroke-width="0.8"/><circle cx="8" cy="10" r="2.5" fill="#3fb9c9" stroke="#1f3a44" stroke-width="0.8"/><circle cx="3" cy="12" r="2" fill="#3fb9c9" stroke="#1f3a44" stroke-width="0.8"/><circle cx="10" cy="14" r="1.8" fill="#3fb9c9" stroke="#1f3a44" stroke-width="0.8"/><circle cx="15" cy="12" r="1.3" fill="#3fb9c9" stroke="#1f3a44" stroke-width="0.8"/><circle cx="14" cy="16" r="1" fill="#3fb9c9" stroke="#1f3a44" stroke-width="0.8"/></g>
<g transform="translate(538,33.5) scale(1)"><rect x="2.5" y="0" width="15" height="16" fill="#3fb9c9" stroke="#1f3a44" stroke-width="1.2"/><rect x="2.5" y="4" width="15" height="1.2" fill="#1f3a44"/><path d="M5,1 L6.5,2.5 L5,4 M9,1 L10.5,2.5 L9,4 M13,1 L14.5,2.5 L13,4" stroke="#1f3a44" fill="none"/><circle cx="5" cy="12" r="4.5" fill="#3fb9c9" stroke="#1f3a44" stroke-width="1.2"/></g>
<text x="570" y="48" font-size="17" font-weight="bold" fill="#3fb9c9" stroke="#1f3a44" stroke-width="0.8" text-anchor="middle">?</text>
<g transform="translate(587.7,32.7) scale(1.000,0.970)"><path d="M2.5,7 V4.5 A3.15,3.4 0 0 1 8.8,4.5 V7" fill="none" stroke="#c8c8c8" stroke-width="2"/><rect x="0" y="7" width="11.3" height="9.4" rx="1" fill="#c8c8c8"/><circle cx="5.65" cy="10.8" r="1.3" fill="#444"/><rect x="5" y="11" width="1.3" height="3" fill="#444"/></g>
<g transform="translate(608.5,32.7) scale(1)"><path d="M0.5,3.5 V11.5 H4 M0.5,3.5 H4" fill="none" stroke="#c8c8c8" stroke-width="1.2" stroke-dasharray="2,1.5"/><rect x="4" y="0" width="9" height="10" fill="#c8c8c8"/><path d="M8,4 L8,16.5 L10.5,14 L12.5,17.5 L14,16.5 L12,13 L15.5,13Z" fill="#c8c8c8" stroke="#444" stroke-width="0.9"/></g>
<rect x="637.5" y="31" width="1" height="20" fill="#8a8a8a"/><rect x="636.5" y="36.0" width="3" height="10.0" rx="1" fill="#8a8a8a"/>
<g transform="translate(653,33) scale(1)"><path d="M5,12.5 L2.2,9.7 A5,5 0 0 1 9.3,2.6 L12.1,5.4" fill="none" stroke="#c8c8c8" stroke-width="2.6"/><rect x="4" y="11.3" width="2.5" height="2.5" transform="rotate(45 5.2 12.5)" fill="#c8c8c8"/><rect x="11" y="4.2" width="2.5" height="2.5" transform="rotate(45 12.2 5.4)" fill="#c8c8c8"/><path d="M9,7 V17 M13,7 V17 M6,10 H16 M6,14 H16" stroke="#3fb9c9" stroke-width="1.2"/></g>
<g transform="translate(676,33) scale(1)"><path d="M5,12.5 L2.2,9.7 A5,5 0 0 1 9.3,2.6 L12.1,5.4" fill="none" stroke="#c8c8c8" stroke-width="2.6"/><rect x="4" y="11.3" width="2.5" height="2.5" transform="rotate(45 5.2 12.5)" fill="#c8c8c8"/><rect x="11" y="4.2" width="2.5" height="2.5" transform="rotate(45 12.2 5.4)" fill="#c8c8c8"/><path d="M7,17 Q7,13 11,12 Q15,11 15,7 V5" fill="none" stroke="#3fb9c9" stroke-width="1.8"/></g>
<g transform="translate(699,33) scale(1)"><path d="M5,12.5 L2.2,9.7 A5,5 0 0 1 9.3,2.6 L12.1,5.4" fill="none" stroke="#c8c8c8" stroke-width="2.6"/><rect x="4" y="11.3" width="2.5" height="2.5" transform="rotate(45 5.2 12.5)" fill="#c8c8c8"/><rect x="11" y="4.2" width="2.5" height="2.5" transform="rotate(45 12.2 5.4)" fill="#c8c8c8"/><circle cx="13" cy="14" r="1.9" fill="#3fb9c9"/></g>
<g transform="translate(722,33) scale(1)"><path d="M5,12.5 L2.2,9.7 A5,5 0 0 1 9.3,2.6 L12.1,5.4" fill="none" stroke="#c8c8c8" stroke-width="2.6"/><rect x="4" y="11.3" width="2.5" height="2.5" transform="rotate(45 5.2 12.5)" fill="#c8c8c8"/><rect x="11" y="4.2" width="2.5" height="2.5" transform="rotate(45 12.2 5.4)" fill="#c8c8c8"/><circle cx="13" cy="1" r="1.3" fill="none" stroke="#3fb9c9"/><circle cx="11" cy="12" r="2" fill="none" stroke="#3fb9c9" stroke-width="1.1"/><path d="M11,15 V17 M14,12 H16" stroke="#3fb9c9"/></g>
<g transform="translate(745,33) scale(1)"><path d="M5,12.5 L2.2,9.7 A5,5 0 0 1 9.3,2.6 L12.1,5.4" fill="none" stroke="#c8c8c8" stroke-width="2.6"/><rect x="4" y="11.3" width="2.5" height="2.5" transform="rotate(45 5.2 12.5)" fill="#c8c8c8"/><rect x="11" y="4.2" width="2.5" height="2.5" transform="rotate(45 12.2 5.4)" fill="#c8c8c8"/><path d="M6,13 L12,7 L17,12 L11,18Z M9,10 L14,15 M11.5,8.5 L9,11 M14.5,11.5 L12,14" fill="none" stroke="#3fb9c9" stroke-width="0.9"/></g>
<g transform="translate(769,34) scale(1)"><path d="M5,12.5 L2.2,9.7 A5,5 0 0 1 9.3,2.6 L12.1,5.4" fill="none" stroke="#c8c8c8" stroke-width="2.6"/><rect x="4" y="11.3" width="2.5" height="2.5" transform="rotate(45 5.2 12.5)" fill="#c8c8c8"/><rect x="11" y="4.2" width="2.5" height="2.5" transform="rotate(45 12.2 5.4)" fill="#c8c8c8"/></g>
<path d="M793,39 L800,39 L796.5,43Z" fill="#999"/>
<rect x="918.3" y="31" width="1" height="20" fill="#8a8a8a"/><rect x="917.3" y="36.0" width="3" height="10.0" rx="1" fill="#8a8a8a"/>
<path d="M934.5,39.3 L940.5,39.3 L937.5,42.9Z" fill="#999"/>
<rect x="1057.9" y="31" width="1" height="20" fill="#777"/><path d="M1058.4,36.0 L1062.4,41.0 L1058.4,46.0Z" fill="#777"/>
<rect x="1081.8" y="31" width="1" height="20" fill="#8a8a8a"/><rect x="1080.8" y="36.0" width="3" height="10.0" rx="1" fill="#8a8a8a"/>
<g transform="translate(1096.8,32.3) scale(1)"><rect x="0" y="0" width="16.4" height="16.9" fill="#c8c8c8"/><rect x="0" y="4" width="16.4" height="2" fill="#444"/><path d="M2,1 L3,3 M6,1 L7,3 M10,1 L11,3 M14,1 L15,3" stroke="#444" stroke-width="1.3"/><ellipse cx="8.2" cy="11.5" rx="6" ry="3" fill="none" stroke="#444" stroke-width="1.2"/><circle cx="8.2" cy="11.5" r="1.8" fill="#444"/></g>
<g transform="translate(1119.6,32.3) scale(1)"><rect x="0" y="0" width="16.4" height="16.9" fill="#c8c8c8"/><rect x="0" y="4" width="16.4" height="2" fill="#444"/><path d="M2,1 L3,3 M6,1 L7,3 M10,1 L11,3 M14,1 L15,3" stroke="#444" stroke-width="1.3"/></g>
<g transform="translate(1142.5,32.3) scale(1)"><rect x="0" y="0" width="16.4" height="16.9" fill="#c8c8c8"/><rect x="0" y="4" width="16.4" height="2" fill="#444"/><path d="M2,1 L3,3 M6,1 L7,3 M10,1 L11,3 M14,1 L15,3" stroke="#444" stroke-width="1.3"/><text x="8.2" y="15" font-size="8" font-weight="bold" fill="#444" text-anchor="middle" textLength="13" lengthAdjust="spacingAndGlyphs">IPR</text></g>
<g transform="translate(1165.7,32.3) scale(1)"><rect x="0" y="0" width="16.4" height="16.9" fill="#c8c8c8"/><rect x="0" y="4" width="16.4" height="2" fill="#444"/><path d="M2,1 L3,3 M6,1 L7,3 M10,1 L11,3 M14,1 L15,3" stroke="#444" stroke-width="1.3"/><circle cx="12.5" cy="13" r="5.2" fill="#444"/><circle cx="12.5" cy="13" r="3.3" fill="#3fb9c9"/><rect x="11.70" y="8.50" width="1.6" height="1.6" fill="#3fb9c9" transform="rotate(0.0 12.5 13)"/><rect x="11.70" y="8.50" width="1.6" height="1.6" fill="#3fb9c9" transform="rotate(45.0 12.5 13)"/><rect x="11.70" y="8.50" width="1.6" height="1.6" fill="#3fb9c9" transform="rotate(90.0 12.5 13)"/><rect x="11.70" y="8.50" width="1.6" height="1.6" fill="#3fb9c9" transform="rotate(135.0 12.5 13)"/><rect x="11.70" y="8.50" width="1.6" height="1.6" fill="#3fb9c9" transform="rotate(180.0 12.5 13)"/><rect x="11.70" y="8.50" width="1.6" height="1.6" fill="#3fb9c9" transform="rotate(225.0 12.5 13)"/><rect x="11.70" y="8.50" width="1.6" height="1.6" fill="#3fb9c9" transform="rotate(270.0 12.5 13)"/><rect x="11.70" y="8.50" width="1.6" height="1.6" fill="#3fb9c9" transform="rotate(315.0 12.5 13)"/><circle cx="12.5" cy="13" r="1.48" fill="#444"/></g>
<g transform="translate(1188.9,32.7) scale(1)"><circle cx="8.2" cy="8.2" r="8.2" fill="#3fb9c9"/><circle cx="8.2" cy="7" r="4.3" fill="#444"/><circle cx="8.2" cy="7" r="3.3" fill="#c8c8c8"/></g>
<g transform="translate(1211.3,32.3) scale(1)"><rect x="0" y="0" width="16.4" height="16.9" fill="#c8c8c8"/><rect x="0" y="4" width="16.4" height="2" fill="#444"/><path d="M2,1 L3,3 M6,1 L7,3 M10,1 L11,3 M14,1 L15,3" stroke="#444" stroke-width="1.3"/><path d="M12,8 L17,11 L12,14 L7,11Z" fill="#3fb9c9" stroke="#444"/><path d="M12,11 L17,14 L12,17 L7,14Z" fill="#3fb9c9" stroke="#444"/></g>
<g transform="translate(1234.8,32.5) scale(1)"><path d="M9,7.5 L15.5,1" stroke="#c8c8c8" stroke-width="2.6" stroke-linecap="round"/><path d="M5,9 L8,6 L10.5,8.5 Q9,11.5 6,11Z" fill="#c8c8c8"/><path d="M0,6 H3 M1.5,12.5 L3.5,10.5" stroke="#3fb9c9" stroke-width="1.2"/><circle cx="12.5" cy="12" r="3.6" fill="#3fb9c9"/><rect x="11.70" y="7.20" width="1.6" height="1.6" fill="#3fb9c9" transform="rotate(0.0 12.5 12)"/><rect x="11.70" y="7.20" width="1.6" height="1.6" fill="#3fb9c9" transform="rotate(45.0 12.5 12)"/><rect x="11.70" y="7.20" width="1.6" height="1.6" fill="#3fb9c9" transform="rotate(90.0 12.5 12)"/><rect x="11.70" y="7.20" width="1.6" height="1.6" fill="#3fb9c9" transform="rotate(135.0 12.5 12)"/><rect x="11.70" y="7.20" width="1.6" height="1.6" fill="#3fb9c9" transform="rotate(180.0 12.5 12)"/><rect x="11.70" y="7.20" width="1.6" height="1.6" fill="#3fb9c9" transform="rotate(225.0 12.5 12)"/><rect x="11.70" y="7.20" width="1.6" height="1.6" fill="#3fb9c9" transform="rotate(270.0 12.5 12)"/><rect x="11.70" y="7.20" width="1.6" height="1.6" fill="#3fb9c9" transform="rotate(315.0 12.5 12)"/><circle cx="12.5" cy="12" r="1.62" fill="#444"/></g>
<rect x="1260.4" y="34.7" width="4" height="12.7" rx="1" fill="#c8c8c8"/><rect x="1267.2" y="34.7" width="4" height="12.7" rx="1" fill="#c8c8c8"/>
<rect x="1286.0" y="31" width="1" height="20" fill="#777"/><path d="M1286.5,36.0 L1290.5,41.0 L1286.5,46.0Z" fill="#777"/>
<rect x="1309.9" y="31" width="1" height="20" fill="#8a8a8a"/><rect x="1308.9" y="36.0" width="3" height="10.0" rx="1" fill="#8a8a8a"/>
<defs><linearGradient id="pg" x1="0" y1="0" x2="0" y2="1"><stop offset="0" stop-color="#fafafa"/><stop offset="1" stop-color="#b8b8b8"/></linearGradient></defs><ellipse cx="1332" cy="38.3" rx="3.9" ry="5.2" fill="url(#pg)" stroke="#111" stroke-width="1"/><path d="M1325.5,48.5 Q1326.5,44.2 1332,43.8 Q1337.5,44.2 1338.5,48.5Z" fill="url(#pg)" stroke="#111" stroke-width="1"/>
<path d="M1430,39 L1439,39 L1434.5,44Z" fill="#c8c8c8"/>
<g transform="translate(1804.7,32.4) scale(1)"><path d="M0,5 L6,1 L13,1 V17.7 L6,17.7 L0,14Z" fill="#c8c8c8"/><path d="M6,1 V17.7 M0,9.5 L6,9.5 M3,3 V16" stroke="#444" stroke-width="0.8"/><rect x="13" y="0" width="5" height="3" fill="#c8c8c8"/><rect x="14" y="3" width="2.5" height="14.7" fill="#c8c8c8"/></g>
<g transform="translate(1828.9,32.4) scale(1)"><circle cx="8.2" cy="2" r="2" fill="#c8c8c8"/><rect x="5" y="5" width="6.5" height="7" fill="none" stroke="#c8c8c8" stroke-width="1.5"/><rect x="0" y="6" width="2" height="2" fill="#c8c8c8"/><rect x="14.4" y="6" width="2" height="2" fill="#c8c8c8"/><path d="M2,7 H5 M11.5,7 H14.4 M6.5,12 V16 M10,12 V16" stroke="#c8c8c8" stroke-width="1.5"/><rect x="5.5" y="16" width="2" height="2" fill="#c8c8c8"/><rect x="9" y="16" width="2" height="2" fill="#c8c8c8"/></g>
<rect x="1849" y="31" width="22.200000000000045" height="21.9" fill="#5285a6"/>
<g transform="translate(1851,32.5) scale(1)"><path d="M1,2 H7" stroke="#c8c8c8" stroke-width="1.2"/><rect x="7.5" y="0" width="11" height="4.5" fill="#2a2a2a" stroke="#c8c8c8" stroke-width="1.2"/><path d="M1,8.7 H7" stroke="#c8c8c8" stroke-width="1.2"/><rect x="7.5" y="6.7" width="11" height="4.5" fill="#2a2a2a" stroke="#c8c8c8" stroke-width="1.2"/><path d="M1,15.5 H7" stroke="#c8c8c8" stroke-width="1.2"/><rect x="7.5" y="13.5" width="11" height="4.5" fill="#2a2a2a" stroke="#c8c8c8" stroke-width="1.2"/></g>
<g transform="translate(1874.6,32.4) scale(1)"><circle cx="1.8" cy="2" r="1.5" fill="#c8c8c8"/><circle cx="1.8" cy="9" r="1.5" fill="#c8c8c8"/><circle cx="1.8" cy="16" r="1.5" fill="#c8c8c8"/><path d="M4.5,2 H7 M4.5,9 H10 M4.5,16 H10" stroke="#c8c8c8" stroke-width="1.2"/><rect x="8" y="0.5" width="9" height="2.5" fill="#c8c8c8"/><rect x="11.5" y="2" width="2.5" height="15" fill="#c8c8c8"/></g>
<g transform="translate(1897.8,33) scale(1)"><path d="M8,0 L16,5 L8,10 L0,5Z" fill="#c8c8c8"/><path d="M0,8 L8,13 L16,8 M0,11 L8,16 L16,11" fill="none" stroke="#c8c8c8" stroke-width="1.6"/><path d="M5,4 H11 M4,6 H12" stroke="#444" stroke-width="0.9"/></g>
<rect x="3" y="59" width="1" height="1" fill="#888"/><rect x="6" y="59" width="1" height="1" fill="#888"/>
<rect x="3" y="62" width="1" height="1" fill="#888"/><rect x="6" y="62" width="1" height="1" fill="#888"/>
<rect x="3" y="65" width="1" height="1" fill="#888"/><rect x="6" y="65" width="1" height="1" fill="#888"/>
<rect x="3" y="68" width="1" height="1" fill="#888"/><rect x="6" y="68" width="1" height="1" fill="#888"/>
<rect x="3" y="71" width="1" height="1" fill="#888"/><rect x="6" y="71" width="1" height="1" fill="#888"/>
<rect x="3" y="74" width="1" height="1" fill="#888"/><rect x="6" y="74" width="1" height="1" fill="#888"/>
<rect x="3" y="77" width="1" height="1" fill="#888"/><rect x="6" y="77" width="1" height="1" fill="#888"/>
<rect x="3" y="80" width="1" height="1" fill="#888"/><rect x="6" y="80" width="1" height="1" fill="#888"/>
<rect x="3" y="83" width="1" height="1" fill="#888"/><rect x="6" y="83" width="1" height="1" fill="#888"/>
<rect x="3" y="86" width="1" height="1" fill="#888"/><rect x="6" y="86" width="1" height="1" fill="#888"/>
<rect x="3" y="89" width="1" height="1" fill="#888"/><rect x="6" y="89" width="1" height="1" fill="#888"/>
<rect x="3" y="92" width="1" height="1" fill="#888"/><rect x="6" y="92" width="1" height="1" fill="#888"/>
<rect x="3" y="95" width="1" height="1" fill="#888"/><rect x="6" y="95" width="1" height="1" fill="#888"/>
<rect x="3" y="98" width="1" height="1" fill="#888"/><rect x="6" y="98" width="1" height="1" fill="#888"/>
<rect x="3" y="101" width="1" height="1" fill="#888"/><rect x="6" y="101" width="1" height="1" fill="#888"/>
<rect x="3" y="104" width="1" height="1" fill="#888"/><rect x="6" y="104" width="1" height="1" fill="#888"/>
<rect x="3" y="107" width="1" height="1" fill="#888"/><rect x="6" y="107" width="1" height="1" fill="#888"/>
<rect x="3" y="110" width="1" height="1" fill="#888"/><rect x="6" y="110" width="1" height="1" fill="#888"/>
<rect x="3" y="113" width="1" height="1" fill="#888"/><rect x="6" y="113" width="1" height="1" fill="#888"/>
<rect x="3" y="116" width="1" height="1" fill="#888"/><rect x="6" y="116" width="1" height="1" fill="#888"/>
<rect x="3" y="119" width="1" height="1" fill="#888"/><rect x="6" y="119" width="1" height="1" fill="#888"/>
<rect x="19" y="72" width="10" height="1.5" fill="#c8c8c8"/><rect x="19" y="75" width="10" height="1.5" fill="#c8c8c8"/>
<g transform="translate(19.5,102) scale(1)"><circle cx="5" cy="4.5" r="3.2" fill="none" stroke="#c8c8c8" stroke-width="1.6"/><rect x="4.3" y="-0.5" width="1.4" height="2" fill="#c8c8c8" transform="rotate(0 5 4.5)"/><rect x="4.3" y="-0.5" width="1.4" height="2" fill="#c8c8c8" transform="rotate(45 5 4.5)"/><rect x="4.3" y="-0.5" width="1.4" height="2" fill="#c8c8c8" transform="rotate(90 5 4.5)"/><rect x="4.3" y="-0.5" width="1.4" height="2" fill="#c8c8c8" transform="rotate(135 5 4.5)"/><rect x="4.3" y="-0.5" width="1.4" height="2" fill="#c8c8c8" transform="rotate(180 5 4.5)"/><rect x="4.3" y="-0.5" width="1.4" height="2" fill="#c8c8c8" transform="rotate(225 5 4.5)"/><rect x="4.3" y="-0.5" width="1.4" height="2" fill="#c8c8c8" transform="rotate(270 5 4.5)"/><rect x="4.3" y="-0.5" width="1.4" height="2" fill="#c8c8c8" transform="rotate(315 5 4.5)"/></g>
<g transform="translate(50,83) scale(1)"><path d="M8,0.5 Q12.5,0.5 12.5,4 V8.5 Q12.5,10 11,10 H5.5 Q3.5,10 3.5,12 V14 H2 Q0,14 0,9.5 Q0,5.5 3,5.5 H8 V4.5 H4 Q4,0.5 8,0.5Z" fill="#111"/><circle cx="6.5" cy="2.5" r="0.9" fill="#eee"/><path d="M9.5,17 Q5,17 5,13.5 V9.5 Q5,8 6.5,8 H12 Q14,8 14,6 V3.5 H15.5 Q17.5,3.5 17.5,8 Q17.5,12 14.5,12 H9.5 V13 H13.5 Q13.5,17 9.5,17Z" fill="#9a9a9a"/></g>
<rect x="2" y="130" width="1" height="1" fill="#888"/><rect x="2" y="133" width="1" height="1" fill="#888"/>
<rect x="5" y="130" width="1" height="1" fill="#888"/><rect x="5" y="133" width="1" height="1" fill="#888"/>
<rect x="8" y="130" width="1" height="1" fill="#888"/><rect x="8" y="133" width="1" height="1" fill="#888"/>
<rect x="11" y="130" width="1" height="1" fill="#888"/><rect x="11" y="133" width="1" height="1" fill="#888"/>
<rect x="14" y="130" width="1" height="1" fill="#888"/><rect x="14" y="133" width="1" height="1" fill="#888"/>
<rect x="17" y="130" width="1" height="1" fill="#888"/><rect x="17" y="133" width="1" height="1" fill="#888"/>
<rect x="20" y="130" width="1" height="1" fill="#888"/><rect x="20" y="133" width="1" height="1" fill="#888"/>
<rect x="23" y="130" width="1" height="1" fill="#888"/><rect x="23" y="133" width="1" height="1" fill="#888"/>
<rect x="26" y="130" width="1" height="1" fill="#888"/><rect x="26" y="133" width="1" height="1" fill="#888"/>
<rect x="29" y="130" width="1" height="1" fill="#888"/><rect x="29" y="133" width="1" height="1" fill="#888"/>
<rect x="32" y="130" width="1" height="1" fill="#888"/><rect x="32" y="133" width="1" height="1" fill="#888"/>
<rect x="35" y="130" width="1" height="1" fill="#888"/><rect x="35" y="133" width="1" height="1" fill="#888"/>
<rect x="38" y="130" width="1" height="1" fill="#888"/><rect x="38" y="133" width="1" height="1" fill="#888"/>
<g transform="translate(16.5,144.8) scale(1)"><path d="M0,0 L0,20 L5,15.5 L9,24.5 L12,23 L8,14 L16,14Z" fill="#c8c8c8"/></g>
<g transform="translate(9,179.8) scale(1)"><ellipse cx="12" cy="9" rx="12" ry="7" transform="rotate(-25 12 9)" fill="none" stroke="#3fb9c9" stroke-width="2.2" stroke-dasharray="4,2.5"/><path d="M14,8 L14,26 L18,22 L21,28 L24,26.5 L21,20.5 L27,20.5Z" fill="#c8c8c8" stroke="#444" stroke-width="1"/></g>
<g transform="translate(8,217) scale(1)"><ellipse cx="10" cy="18" rx="9" ry="8" transform="rotate(-25 10 18)" fill="none" stroke="#3fb9c9" stroke-width="2.2" stroke-dasharray="4,2.5"/><path d="M15,13 L27,1.5" stroke="#c8c8c8" stroke-width="2.5" stroke-linecap="round"/><path d="M9,16 Q11,11 15,12 L16,15 Q14,18 9,16Z" fill="#c8c8c8"/></g>
<rect x="4" y="250.3" width="36" height="35.39999999999998" fill="#5285a6"/>
<g transform="translate(7,254) scale(1)"><rect x="8.5" y="8.5" width="12" height="12" fill="#c8c8c8" stroke="#2a3a44" stroke-width="1"/><path d="M14.5,1.5 L10.5,5.5 H18.5Z M14.5,27.5 L10.5,23.5 H18.5Z M1.5,14.5 L5.5,10.5 V18.5Z M27.5,14.5 L23.5,10.5 V18.5Z" fill="#3fb9c9" stroke="#2a3a44" stroke-width="0.8"/></g>
<g transform="translate(6.8,291) scale(1)"><path d="M9,17.5 L16,10.5 L23,17.5 L16,24.5Z" fill="#c8c8c8" transform="translate(-2.5 -3)"/><path d="M12,28.5 A13,13 0 1 1 27.5,16" fill="none" stroke="#3fb9c9" stroke-width="1.6"/><path d="M24,15.5 L31,15.5 L27.5,20.5Z" fill="#3fb9c9"/></g>
<g transform="translate(9.5,328.6) scale(1)"><rect x="1" y="1" width="24" height="24" fill="none" stroke="#3fb9c9" stroke-width="1.2" stroke-dasharray="3,2"/><rect x="0.5" y="14" width="11.5" height="11.5" fill="#c8c8c8"/><path d="M13,10.5 H16.5 V14" fill="none" stroke="#3fb9c9" stroke-width="1.3"/></g>
<g transform="translate(7.8,449.8) scale(1)"><rect x="0.5" y="0.5" width="27.5" height="27.5" fill="#c8c8c8" stroke="#c8c8c8"/><rect x="2.5" y="2.5" width="23.5" height="23.5" fill="#c8c8c8" stroke="#444" stroke-width="1"/><path d="M14,8 L17,11 L14,14 L11,11Z M9,13 L12,16 L9,19 L6,16Z M19,13 L22,16 L19,19 L16,16Z M14,18 L17,21 L14,24 L11,21Z" fill="#444" transform="translate(0 -2)"/></g>
<g transform="translate(7.8,486.8) scale(1)"><rect x="0.5" y="0.5" width="12.5" height="12.5" fill="#444" stroke="#c8c8c8" stroke-width="1"/><path d="M6.75,2.75 V10.75 M2.75,6.75 H10.75" stroke="#c8c8c8" stroke-width="1"/><rect x="15" y="0" width="13.5" height="13.5" fill="#c8c8c8"/><path d="M21.75,4 L24.75,6.75 L21.75,9.5 L18.75,6.75Z" fill="#444"/><rect x="0.5" y="15.5" width="12.5" height="12.5" fill="#444" stroke="#c8c8c8" stroke-width="1"/><path d="M6.75,17.75 V25.75 M2.75,21.75 H10.75" stroke="#c8c8c8" stroke-width="1"/><rect x="15.5" y="15.5" width="12.5" height="12.5" fill="#444" stroke="#c8c8c8" stroke-width="1"/><path d="M21.75,17.75 V25.75 M17.75,21.75 H25.75" stroke="#c8c8c8" stroke-width="1"/></g>
<g transform="translate(7.8,523.5) scale(1)"><rect x="0.5" y="0.5" width="12.5" height="27.3" fill="#444" stroke="#c8c8c8" stroke-width="1"/><path d="M6.75,10.15 V18.15 M2.75,14.15 H10.75" stroke="#c8c8c8" stroke-width="1"/><rect x="15" y="0" width="13.5" height="28.3" fill="#c8c8c8"/><path d="M21.75,11 L24.75,14.15 L21.75,17.3 L18.75,14.15Z" fill="#444"/></g>
<rect x="3.8" y="556.5" width="36.2" height="36.0" fill="#5285a6"/>
<g transform="translate(7.5,560) scale(1)"><rect x="0.5" y="0.5" width="28" height="28" fill="none" stroke="#c8c8c8" stroke-width="1"/><rect x="2.5" y="2.5" width="24" height="24" fill="none" stroke="#c8c8c8" stroke-width="1"/><path d="M6,6 H18 M9,7 V22 M9,11 H12 M9,16 H12 M9,21 H12 M12,10 H22 M12,15 H20 M12,20 H22" stroke="#c8c8c8" stroke-width="1"/><rect x="4.5" y="4.5" width="3" height="3" fill="#c8c8c8"/><rect x="10.5" y="9.5" width="3" height="3" fill="#c8c8c8"/><rect x="10.5" y="14.5" width="3" height="3" fill="#c8c8c8"/><rect x="10.5" y="19.5" width="3" height="3" fill="#c8c8c8"/></g>
<g transform="translate(3.8,605) scale(1)"><path d="M4,0.5 H0.5 V35.5 H4 M32,0.5 H35.7 V35.5 H32" fill="none" stroke="#22dd22" stroke-width="1.4"/><circle cx="16" cy="16" r="7" fill="none" stroke="#c8c8c8" stroke-width="2.5"/><path d="M21,21 L27,27" stroke="#c8c8c8" stroke-width="3" stroke-linecap="round"/></g>
<defs><linearGradient id="mlogo" x1="0" y1="0" x2="1" y2="1"><stop offset="0" stop-color="#2bb3b8"/><stop offset="0.5" stop-color="#14939d"/><stop offset="1" stop-color="#0d7c86"/></linearGradient></defs>
<defs><linearGradient id="mband" x1="0" y1="0" x2="0" y2="1"><stop offset="0" stop-color="#a6d9dc"/><stop offset="1" stop-color="#5fb2b8"/></linearGradient></defs><path d="M6,865.5 L14.1,877.5 V893.8 H6Z" fill="#13a0a8"/><path d="M6.5,881 L14.1,870 V893.8 H7Z" fill="#0f8d96" opacity="0.6"/><path d="M28.2,864.9 H37.9 L30.5,881 L25.1,887.6 L22.6,879.5Z" fill="#14aab0"/><path d="M30.4,880.5 L37.9,865 V893.8 H30.4Z" fill="#1199a1"/><path d="M32,893.8 L37.9,872 V893.8Z" fill="#22b9bd" opacity="0.7"/><path d="M6.2,864.6 L15.2,864 L25.1,887.6 L19.4,887.9Z" fill="url(#mband)"/>
<rect x="57.5" y="172.5" width="10" height="15" fill="none" stroke="#5e5e5e" stroke-width="1" stroke-dasharray="3,1.5"/><path d="M55,172.5 L60,175.2 L55,178Z M65,172.5 L70,175.2 L65,178Z M55,182.5 L60,185.2 L55,188Z M65,182.5 L70,185.2 L65,188Z" fill="#606060"/>
<path d="M403.5,179 L412.5,179 L408.0,184.5Z" fill="#c8c8c8"/>
<path d="M408,200 L417,200 L412.5,195Z" fill="#c8c8c8"/>
<path d="M408,870.5 L417,870.5 L412.5,875.5Z" fill="#c8c8c8"/>
<g transform="translate(85.7,197.8) scale(1)"><rect x="0" y="1" width="9.5" height="7" fill="#c8c8c8"/><path d="M10.5,4.5 L14.3,0.5 V8.2Z" fill="#c8c8c8"/></g>
<g transform="translate(85.7,217.8) scale(1)"><rect x="0" y="1" width="9.5" height="7" fill="#c8c8c8"/><path d="M10.5,4.5 L14.3,0.5 V8.2Z" fill="#c8c8c8"/></g>
<g transform="translate(85.7,237.8) scale(1)"><rect x="0" y="1" width="9.5" height="7" fill="#c8c8c8"/><path d="M10.5,4.5 L14.3,0.5 V8.2Z" fill="#c8c8c8"/></g>
<g transform="translate(85.7,257.8) scale(1)"><rect x="0" y="1" width="9.5" height="7" fill="#c8c8c8"/><path d="M10.5,4.5 L14.3,0.5 V8.2Z" fill="#c8c8c8"/></g>
<g transform="translate(85,276) scale(1)"><path d="M8,0 L11,3 L8,6 L5,3Z M3.5,3.5 L6.5,6.5 L3.5,9.5 L0.5,6.5Z M12.5,3.5 L15.5,6.5 L12.5,9.5 L9.5,6.5Z M8,7 L11,10 L8,13 L5,10Z" fill="#c8c8c8"/></g>
<g transform="translate(85,294) scale(1)"><circle cx="8" cy="8" r="7.3" fill="none" stroke="#c8c8c8" stroke-width="1.2"/><circle cx="6" cy="10.5" r="3" fill="#c8c8c8"/><path d="M8,4.5 H11.5 V12 H8Z" fill="#3fb9c9"/></g>
<g transform="translate(85,314) scale(1)"><circle cx="8" cy="8" r="7.3" fill="none" stroke="#c8c8c8" stroke-width="1.2"/><circle cx="6" cy="10.5" r="3" fill="#c8c8c8"/><path d="M8,4.5 H11.5 V12 H8Z" fill="#3fb9c9"/></g>
<rect x="63" y="880" width="330" height="10" rx="5" fill="#5a5a5a"/>
<path d="M60,880.5 L54.5,885 L60,889.5Z M396,880.5 L401.5,885 L396,889.5Z" fill="#c8c8c8"/>
<rect x="172" y="893" width="1" height="1" fill="#777"/>
<rect x="176" y="893" width="1" height="1" fill="#777"/>
<rect x="180" y="893" width="1" height="1" fill="#777"/>
<rect x="184" y="893" width="1" height="1" fill="#777"/>
<rect x="188" y="893" width="1" height="1" fill="#777"/>
<rect x="192" y="893" width="1" height="1" fill="#777"/>
<rect x="196" y="893" width="1" height="1" fill="#777"/>
<rect x="200" y="893" width="1" height="1" fill="#777"/>
<rect x="204" y="893" width="1" height="1" fill="#777"/>
<rect x="208" y="893" width="1" height="1" fill="#777"/>
<rect x="212" y="893" width="1" height="1" fill="#777"/>
<rect x="216" y="893" width="1" height="1" fill="#777"/>
<rect x="220" y="893" width="1" height="1" fill="#777"/>
<rect x="224" y="893" width="1" height="1" fill="#777"/>
<rect x="228" y="893" width="1" height="1" fill="#777"/>
<rect x="232" y="893" width="1" height="1" fill="#777"/>
<rect x="236" y="893" width="1" height="1" fill="#777"/>
<rect x="240" y="893" width="1" height="1" fill="#777"/>
<rect x="244" y="893" width="1" height="1" fill="#777"/>
<rect x="248" y="893" width="1" height="1" fill="#777"/>
<rect x="252" y="893" width="1" height="1" fill="#777"/>
<rect x="256" y="893" width="1" height="1" fill="#777"/>
<rect x="260" y="893" width="1" height="1" fill="#777"/>
<rect x="264" y="893" width="1" height="1" fill="#777"/>
<rect x="268" y="893" width="1" height="1" fill="#777"/>
<rect x="272" y="893" width="1" height="1" fill="#777"/>
<rect x="276" y="893" width="1" height="1" fill="#777"/>
<rect x="280" y="893" width="1" height="1" fill="#777"/>
<rect x="284" y="893" width="1" height="1" fill="#777"/>
<rect x="288" y="893" width="1" height="1" fill="#777"/>
<rect x="292" y="893" width="1" height="1" fill="#777"/>
<rect x="432.0" y="151.2" width="1" height="15.900000000000006" fill="#8a8a8a"/><rect x="431.0" y="155.2" width="3" height="8.0" rx="1" fill="#8a8a8a"/>
<g transform="translate(438.9,151.2) scale(1)"><path d="M2,0 H16 V13.5 L14,15.5 H0 V2Z" fill="#2f86b0"/><rect x="2" y="0" width="14" height="13.5" fill="#45a8d6"/><text x="9" y="11.5" font-size="11" font-weight="bold" fill="#fff" text-anchor="middle">A</text></g>
<g transform="translate(458.7,151.5) scale(1)"><rect x="2.5" y="2.5" width="9.5" height="9.5" fill="#3fb9c9" stroke="#999" stroke-width="1.5"/><circle cx="2.2" cy="2.2" r="1.6" fill="#999"/><circle cx="12.3" cy="2.2" r="1.6" fill="#999"/><circle cx="2.2" cy="12.3" r="1.6" fill="#999"/><circle cx="12.3" cy="12.3" r="1.6" fill="#999"/></g>
<g transform="translate(477.8,152) scale(1)"><rect x="0" y="0" width="14.3" height="14" fill="#4a5561"/><path d="M1,10 H9 V1" fill="none" stroke="#3b4450" stroke-dasharray="1.5,1"/></g>
<g transform="translate(496.9,152) scale(1)"><circle cx="6.8" cy="7" r="6.8" fill="#55505a"/><path d="M6.8,7 L6.8,0.2 A6.8,6.8 0 0 1 13.3,9Z" fill="#4d5e58"/><path d="M6.8,7 L13.3,9 A6.8,6.8 0 0 1 2,12Z" fill="#4a5670"/></g>
<g transform="translate(514.6,151.5) scale(1)"><rect x="4" y="0" width="12" height="11" fill="#4a6a58"/><rect x="2" y="2" width="12" height="11" fill="#4b5a78"/><rect x="0" y="4" width="12" height="11" fill="#3f5a66"/><path d="M1,13 L4,9 L7,11 L11,6" stroke="#556f7a" fill="none"/></g>
<rect x="537.0" y="151.2" width="1" height="15.900000000000006" fill="#8a8a8a"/><rect x="536.0" y="155.2" width="3" height="8.0" rx="1" fill="#8a8a8a"/>
<g transform="translate(546,154.9) scale(1)"><rect x="0" y="1" width="10" height="6.8" fill="#c8c8c8"/><path d="M10.8,4.3 L14.3,0.3 V8.2Z" fill="#c8c8c8"/></g>
<g transform="translate(564.4,152.5) scale(1)"><path d="M3,2 V0.5 H11 V6 H7 V2Z" fill="#c8c8c8"/><path d="M11.5,4 L14.7,0.3 V7.8Z" fill="#c8c8c8"/><path d="M2,7 V5.5 A2.5,2.5 0 0 1 7,5.5 V7" fill="none" stroke="#3fb9c9" stroke-width="1.4"/><rect x="0.8" y="7" width="7.5" height="6" fill="#3fb9c9"/></g>
<g transform="translate(583.5,152.5) scale(1)"><path d="M3,2 V0.5 H11 V6 H8 V2Z" fill="#c8c8c8"/><path d="M11.5,4 L14.7,0.3 V7.8Z" fill="#c8c8c8"/><circle cx="4.5" cy="9" r="3" fill="none" stroke="#3fb9c9" stroke-width="2"/><rect x="4" y="4.5" width="1.2" height="1.5" fill="#3fb9c9" transform="rotate(0 4.5 9)"/><rect x="4" y="4.5" width="1.2" height="1.5" fill="#3fb9c9" transform="rotate(45 4.5 9)"/><rect x="4" y="4.5" width="1.2" height="1.5" fill="#3fb9c9" transform="rotate(90 4.5 9)"/><rect x="4" y="4.5" width="1.2" height="1.5" fill="#3fb9c9" transform="rotate(135 4.5 9)"/><rect x="4" y="4.5" width="1.2" height="1.5" fill="#3fb9c9" transform="rotate(180 4.5 9)"/><rect x="4" y="4.5" width="1.2" height="1.5" fill="#3fb9c9" transform="rotate(225 4.5 9)"/><rect x="4" y="4.5" width="1.2" height="1.5" fill="#3fb9c9" transform="rotate(270 4.5 9)"/><rect x="4" y="4.5" width="1.2" height="1.5" fill="#3fb9c9" transform="rotate(315 4.5 9)"/></g>
<g transform="translate(606.4,152.8) scale(1)"><path d="M0,0 H7 V11.2 L3.5,8 L0,11.2Z" fill="#c8c8c8"/></g>
<g transform="translate(621.7,152.5) scale(1)"><path d="M5,13 L9,8 V-0.5 L4,4.5 V13" fill="#3fb9c9"/><path d="M0,14.5 L3,10 H7 M2,14.5 H14 L11,10 H9" fill="none" stroke="#c8c8c8" stroke-width="1.1"/></g>
<g transform="translate(640.8,151.5) scale(1)"><path d="M5,0 V8 M1,4.5 H9 M5,0 L3,2 M5,0 L7,2 M1,4.5 L3,2.5 M1,4.5 L3,6.5" fill="none" stroke="#c8c8c8" stroke-width="1.2"/><circle cx="10.5" cy="9.5" r="3" fill="none" stroke="#3fb9c9" stroke-width="1.6"/><path d="M8.5,11.5 L5,15" stroke="#3fb9c9" stroke-width="1.8"/></g>
<g transform="translate(660.5,152) scale(1)"><path d="M11.5,0.5 L3,9 L5,11 L13.5,2.5Z" fill="#c8c8c8"/><path d="M3,9 L0.5,12.5 L4,11Z" fill="#3fb9c9"/><path d="M7,12.5 A2.3,2.3 0 1 0 9,10" fill="none" stroke="#c8c8c8" stroke-width="1"/></g>
<rect x="680.9" y="151.2" width="1" height="15.900000000000006" fill="#8a8a8a"/><rect x="679.9" y="155.2" width="3" height="8.0" rx="1" fill="#8a8a8a"/>
<rect x="688" y="150.1" width="18.100000000000023" height="17.700000000000017" fill="#5285a6"/>
<g transform="translate(690.5,152.5) scale(1)"><rect x="0" y="0" width="14" height="13.5" fill="#dddddd"/><rect x="1.6" y="1.5" width="2.8" height="2.7" fill="#2a2a2a"/><rect x="1.6" y="5.4" width="2.8" height="2.7" fill="#2a2a2a"/><rect x="1.6" y="9.3" width="2.8" height="2.7" fill="#2a2a2a"/><rect x="5.6" y="1.5" width="2.8" height="2.7" fill="#2a2a2a"/><rect x="5.6" y="5.4" width="2.8" height="2.7" fill="#2a2a2a"/><rect x="5.6" y="9.3" width="2.8" height="2.7" fill="#2a2a2a"/><rect x="9.6" y="1.5" width="2.8" height="2.7" fill="#2a2a2a"/><rect x="9.6" y="5.4" width="2.8" height="2.7" fill="#2a2a2a"/><rect x="9.6" y="9.3" width="2.8" height="2.7" fill="#2a2a2a"/></g>
<g transform="translate(708.5,152.8) scale(1)"><rect x="0.7" y="0.7" width="13.6" height="10.8" fill="none" stroke="#c8c8c8" stroke-width="1.4"/><path d="M1,2.3 H14 M1,9.9 H14" stroke="#c8c8c8" stroke-width="1.2" stroke-dasharray="1.8,1.2"/></g>
<g transform="translate(727.6,152.8) scale(1)"><rect x="0.7" y="0.7" width="13.4" height="11" fill="none" stroke="#c8c8c8" stroke-width="1.4"/><circle cx="7.4" cy="6.2" r="2.6" fill="#3fb9c9"/></g>
<rect x="745" y="150.2" width="18" height="17.80000000000001" fill="#383838"/>
<rect x="745.5" y="150.7" width="17" height="16.8" fill="none" stroke="#2e2e2e"/>
<g transform="translate(748,153) scale(1)"><rect x="0" y="0" width="12" height="12" fill="#555"/><circle cx="6" cy="6" r="3.8" fill="#404040"/></g>
<g transform="translate(765.5,152.8) scale(1)"><rect x="0.7" y="0.7" width="13.6" height="11" fill="none" stroke="#c8c8c8" stroke-width="1.4"/><path d="M7.5,1.5 V11 M2,6.2 H13" stroke="#3fb9c9" stroke-width="1.3" stroke-dasharray="1.2,1.2"/></g>
<g transform="translate(784.6,152.8) scale(1)"><rect x="0.7" y="0.7" width="13.3" height="11" fill="none" stroke="#c8c8c8" stroke-width="1.4"/><path d="M3,10 L5.5,6 L8,10Z" fill="#3fb9c9"/><circle cx="10" cy="4.5" r="2.2" fill="#3fb9c9"/></g>
<g transform="translate(803.4,152.8) scale(1)"><rect x="0.7" y="0.7" width="13.6" height="11" fill="none" stroke="#c8c8c8" stroke-width="1.4"/><path d="M3.5,3 H11.5 V4.5 M3.5,3 V4.5 M7.5,3 V10 M6,10 H9" stroke="#3fb9c9" stroke-width="1.6" fill="none"/></g>
<rect x="825.0" y="151.2" width="1" height="15.900000000000006" fill="#8a8a8a"/><rect x="824.0" y="155.2" width="3" height="8.0" rx="1" fill="#8a8a8a"/>
<g transform="translate(834.3,152) scale(1.000)"><path d="M7.2,0.5 L13.9,4 V11.5 L7.2,15 L0.5,11.5 V4Z" fill="none" stroke="#c8c8c8" stroke-width="1.1"/><path d="M0.5,4 L7.2,7.5 L13.9,4 M7.2,7.5 V15" fill="none" stroke="#c8c8c8" stroke-width="1.1"/></g>
<path d="M841.5,156 V160 M838,163 L841.5,160 L845,163" stroke="#888" stroke-width="0.7" fill="none"/>
<rect x="850.7" y="150.1" width="18.399999999999977" height="17.700000000000017" fill="#5285a6"/>
<g transform="translate(852.8,151.5) scale(1.000)"><path d="M7.2,0.5 L13.9,4 V11.5 L7.2,15 L0.5,11.5 V4Z" fill="#7fd3e3" stroke="#2a3a44" stroke-width="1.1"/><path d="M0.5,4 L7.2,7.5 L13.9,4 M7.2,7.5 V15" fill="none" stroke="#2a3a44" stroke-width="1.1"/></g>
<path d="M853.3,155.5 L860,159 V166 L853.3,162.5Z" fill="#3fb9c9"/><path d="M860,159 L866.7,155.5 V162.5 L860,166Z" fill="#36a9b9"/><path d="M853.3,155.5 L860,159 L866.7,155.5 M860,159 V166" stroke="#2a3a44" stroke-width="0.9" fill="none"/>
<defs><pattern id="chk" width="4" height="4" patternUnits="userSpaceOnUse"><rect width="4" height="4" fill="#3a3a3a"/><rect width="2" height="2" fill="#c8c8c8"/><rect x="2" y="2" width="2" height="2" fill="#c8c8c8"/></pattern></defs>
<circle cx="879" cy="159" r="6.5" fill="url(#chk)"/><path d="M879,152.5 A6.5,6.5 0 0 0 879,165.5Z" fill="#c8c8c8"/>
<g transform="translate(891.6,152) scale(0.951)"><path d="M7.2,0.5 L13.9,4 V11.5 L7.2,15 L0.5,11.5 V4Z" fill="none" stroke="#c8c8c8" stroke-width="1.1"/><path d="M0.5,4 L7.2,7.5 L13.9,4 M7.2,7.5 V15" fill="none" stroke="#c8c8c8" stroke-width="1.1"/></g>
<path d="M894,156 L898.5,158.5 L903,156 L898.5,153.5Z" fill="#3fb9c9"/><path d="M893,157 L898,159.8 V164.5 L893,161.8Z M899,159.8 L904,157 V161.8 L899,164.5Z" fill="#3fb9c9" opacity="0.9"/>
<circle cx="917" cy="159" r="6.7" fill="url(#chk)"/>
<g transform="translate(928.5,151) scale(1)"><circle cx="7.5" cy="6.5" r="3.5" fill="#c8c8c8"/><path d="M5.5,9 L6,12.5 H9 L9.5,9Z" fill="#c8c8c8"/><rect x="6" y="13" width="3" height="2.5" fill="#c8c8c8"/><path d="M1,6.5 H3 M12,6.5 H14 M3,2 L4.2,3.2 M12,2 L10.8,3.2 M7.5,0 V1.5" stroke="#c8c8c8" stroke-width="1.2"/></g>
<g transform="translate(948,152.5) scale(1)"><circle cx="9" cy="6" r="5.5" fill="#3d5658"/><path d="M1,12 L5,9 M3,14 L7,11" stroke="#3f4a4a" stroke-width="2"/></g>
<rect x="968.9" y="151.2" width="1" height="15.900000000000006" fill="#8a8a8a"/><rect x="967.9" y="155.2" width="3" height="8.0" rx="1" fill="#8a8a8a"/>
<g transform="translate(978,152) scale(1)"><circle cx="6.8" cy="5.8" r="5.8" fill="#c8c8c8"/><path d="M0,12 L7,15.5 L13.5,12 L6.5,8.5Z" fill="none" stroke="#3fb9c9" stroke-width="1"/><path d="M4,9.5 L4,13 M7,10 L7,14 M10,10 L10,13" stroke="#555" stroke-width="1.5"/></g>
<g transform="translate(996.9,152) scale(1)"><circle cx="4.5" cy="11" r="4.5" fill="#666"/><circle cx="7.5" cy="8" r="4" fill="#888"/><circle cx="10" cy="5" r="4.8" fill="#c8c8c8"/></g>
<g transform="translate(1016.5,152) scale(1)"><path d="M7,1 A6,6 0 0 0 7,13" fill="none" stroke="#3fb9c9" stroke-width="2.5"/><path d="M7,1 A6,6 0 0 1 7,13" fill="none" stroke="#eee" stroke-width="2.5" stroke-dasharray="2,1.6"/></g>
<rect x="1033.1" y="150.4" width="17.5" height="17.099999999999994" fill="#383838"/>
<rect x="1033.6" y="150.9" width="16.5" height="16.1" fill="none" stroke="#2e2e2e"/><rect x="1036" y="153" width="6" height="6" fill="#405558" opacity="0.6"/><rect x="1040" y="157" width="8" height="8" fill="#415a5e"/>
<rect x="1055.7" y="151.2" width="1" height="15.900000000000006" fill="#8a8a8a"/><rect x="1054.7" y="155.2" width="3" height="8.0" rx="1" fill="#8a8a8a"/>
<g transform="translate(1065.6,152) scale(1)"><rect x="0.7" y="0.7" width="8" height="7.5" fill="none" stroke="#3fb9c9" stroke-width="1.3" stroke-dasharray="2,1.3"/><path d="M6,5 L6,15.5 L8.2,13.5 L10,16.5 L11.5,15.6 L9.8,12.6 L13,12.6Z" fill="#c8c8c8"/></g>
<rect x="1085.9" y="151.2" width="1" height="15.900000000000006" fill="#8a8a8a"/><rect x="1084.9" y="155.2" width="3" height="8.0" rx="1" fill="#8a8a8a"/>
<rect x="1093.9" y="150.4" width="16.09999999999991" height="17.099999999999994" fill="#3a3a3a"/>
<g transform="translate(1096.5,153) scale(1)"><rect x="0.8" y="4" width="7.5" height="7.5" fill="#c8c8c8" stroke="#3a3a3a"/><rect x="3.8" y="1" width="7.5" height="7.5" fill="none" stroke="#c8c8c8" stroke-width="1.5"/><rect x="0.8" y="4" width="7.5" height="7.5" fill="#c8c8c8"/></g>
<rect x="1113" y="150.4" width="15.700000000000045" height="17.099999999999994" fill="#3a3a3a"/>
<g transform="translate(1115.5,153) scale(1)"><rect x="4" y="0.8" width="7.5" height="7.5" fill="none" stroke="#c8c8c8" stroke-width="1.5"/><rect x="0.5" y="4.5" width="7.5" height="7.5" fill="#c8c8c8"/></g>
<g transform="translate(1132.4,152.5) scale(1)"><rect x="0.7" y="0.7" width="13.6" height="12.6" fill="none" stroke="#c8c8c8" stroke-width="1.4"/><path d="M4,4 L11,11" stroke="#c8c8c8" stroke-width="1.4"/><circle cx="4.5" cy="4.5" r="1.8" fill="#c8c8c8"/></g>
<rect x="1153.8" y="151.2" width="1" height="15.900000000000006" fill="#8a8a8a"/><rect x="1152.8" y="155.2" width="3" height="8.0" rx="1" fill="#8a8a8a"/>
<g transform="translate(1164.3,152.5) scale(1)"><circle cx="6.5" cy="6.5" r="6.5" fill="#c8c8c8"/><circle cx="6.5" cy="6.5" r="2.5" fill="#444"/><path d="M6.5,0 L4.5,4.5 M13,6.5 L8.5,5 M6.5,13 L8.5,8.5 M0,6.5 L4.5,8" stroke="#444" stroke-width="1"/></g>
<rect x="1181.9" y="151.2" width="37.899999999999864" height="13.400000000000006" fill="#2b2b2b" rx="2"/>
<text x="1187.10" y="163" font-size="11.2" fill="#d2d2d2" font-weight="normal" textLength="21.01" lengthAdjust="spacingAndGlyphs">0.00</text>
<g transform="translate(1226.7,152.5) scale(1)"><path d="M4.5,1.5 A4,5 0 0 0 4.5,11.5Z" fill="#c8c8c8"/><rect x="6" y="0" width="4.4" height="13" fill="#c8c8c8"/><path d="M6,3 A3,3.5 0 0 1 6,10" fill="#444"/></g>
<rect x="1242.9" y="151.2" width="37.59999999999991" height="13.400000000000006" fill="#2b2b2b" rx="2"/>
<text x="1248.80" y="163" font-size="11.2" fill="#d2d2d2" font-weight="normal" textLength="20.31" lengthAdjust="spacingAndGlyphs">1.00</text>
<rect x="1284" y="150.1" width="17.90000000000009" height="17.700000000000017" fill="#5285a6"/>
<circle cx="1293" cy="159" r="7" fill="#3fb9c9" stroke="#2a3a44" stroke-width="1.2"/><text x="1293" y="161.3" font-size="6" font-weight="bold" fill="#2a3a44" text-anchor="middle">ON</text>
<rect x="1305.4" y="150.1" width="128.89999999999986" height="16.900000000000006" fill="#555555" />
<text x="1308.50" y="164" font-size="11.2" fill="#d2d2d2" font-weight="normal" textLength="124.50" lengthAdjust="spacingAndGlyphs">ACES 1.0 SDR-video (sRG</text>
<defs><linearGradient id="vc" x1="0" y1="0" x2="0" y2="1"><stop offset="0" stop-color="#adadad"/><stop offset="1" stop-color="#959595"/></linearGradient></defs>
<text x="548.60" y="353" font-size="11.2" fill="#999999" font-weight="normal" textLength="72.20" lengthAdjust="spacingAndGlyphs">Chain Creator</text>
<defs><linearGradient id="dm" x1="0" y1="0" x2="1" y2="1"><stop offset="0" stop-color="#bfe8ea"/><stop offset="1" stop-color="#8fd3d8"/></linearGradient></defs>
<rect x="527" y="340" width="15.8" height="15.8" fill="url(#dm)"/><path d="M529.5,352 V343 L534.9,349 L540.3,343 V352" fill="none" stroke="#1d8f98" stroke-width="2.2"/>
<path d="M649.9,348.3 H660" stroke="#111" stroke-width="1"/><rect x="695.5" y="343.5" width="9.5" height="9.5" fill="none" stroke="#111" stroke-width="1"/><path d="M741,343 L751,353 M751,343 L741,353" stroke="#111" stroke-width="1"/>
<rect x="3" y="906" width="1" height="1" fill="#888"/><rect x="6" y="906" width="1" height="1" fill="#888"/>
<rect x="3" y="909" width="1" height="1" fill="#888"/><rect x="6" y="909" width="1" height="1" fill="#888"/>
<rect x="3" y="912" width="1" height="1" fill="#888"/><rect x="6" y="912" width="1" height="1" fill="#888"/>
<rect x="3" y="915" width="1" height="1" fill="#888"/><rect x="6" y="915" width="1" height="1" fill="#888"/>
<rect x="3" y="918" width="1" height="1" fill="#888"/><rect x="6" y="918" width="1" height="1" fill="#888"/>
<rect x="3" y="921" width="1" height="1" fill="#888"/><rect x="6" y="921" width="1" height="1" fill="#888"/>
<rect x="3" y="924" width="1" height="1" fill="#888"/><rect x="6" y="924" width="1" height="1" fill="#888"/>
<rect x="3" y="927" width="1" height="1" fill="#888"/><rect x="6" y="927" width="1" height="1" fill="#888"/>
<rect x="3" y="930" width="1" height="1" fill="#888"/><rect x="6" y="930" width="1" height="1" fill="#888"/>
<rect x="3" y="933" width="1" height="1" fill="#888"/><rect x="6" y="933" width="1" height="1" fill="#888"/>
<rect x="3" y="936" width="1" height="1" fill="#888"/><rect x="6" y="936" width="1" height="1" fill="#888"/>
<rect x="3" y="939" width="1" height="1" fill="#888"/><rect x="6" y="939" width="1" height="1" fill="#888"/>
<rect x="3" y="942" width="1" height="1" fill="#888"/><rect x="6" y="942" width="1" height="1" fill="#888"/>
<rect x="3" y="952" width="1" height="1" fill="#888"/><rect x="6" y="952" width="1" height="1" fill="#888"/>
<rect x="3" y="955" width="1" height="1" fill="#888"/><rect x="6" y="955" width="1" height="1" fill="#888"/>
<rect x="3" y="958" width="1" height="1" fill="#888"/><rect x="6" y="958" width="1" height="1" fill="#888"/>
<rect x="3" y="961" width="1" height="1" fill="#888"/><rect x="6" y="961" width="1" height="1" fill="#888"/>
<rect x="3" y="964" width="1" height="1" fill="#888"/><rect x="6" y="964" width="1" height="1" fill="#888"/>
<rect x="3" y="967" width="1" height="1" fill="#888"/><rect x="6" y="967" width="1" height="1" fill="#888"/>
<rect x="3" y="970" width="1" height="1" fill="#888"/><rect x="6" y="970" width="1" height="1" fill="#888"/>
<rect x="3" y="973" width="1" height="1" fill="#888"/><rect x="6" y="973" width="1" height="1" fill="#888"/>
<rect x="3" y="976" width="1" height="1" fill="#888"/><rect x="6" y="976" width="1" height="1" fill="#888"/>
<rect x="3" y="979" width="1" height="1" fill="#888"/><rect x="6" y="979" width="1" height="1" fill="#888"/>
<rect x="3" y="988" width="1" height="1" fill="#888"/><rect x="6" y="988" width="1" height="1" fill="#888"/>
<rect x="3" y="991" width="1" height="1" fill="#888"/><rect x="6" y="991" width="1" height="1" fill="#888"/>
<rect x="3" y="994" width="1" height="1" fill="#888"/><rect x="6" y="994" width="1" height="1" fill="#888"/>
<rect x="3" y="997" width="1" height="1" fill="#888"/><rect x="6" y="997" width="1" height="1" fill="#888"/>
<rect x="3" y="1000" width="1" height="1" fill="#888"/><rect x="6" y="1000" width="1" height="1" fill="#888"/>
<rect x="3" y="1003" width="1" height="1" fill="#888"/><rect x="6" y="1003" width="1" height="1" fill="#888"/>
<rect x="3" y="1006" width="1" height="1" fill="#888"/><rect x="6" y="1006" width="1" height="1" fill="#888"/>
<rect x="3" y="1009" width="1" height="1" fill="#888"/><rect x="6" y="1009" width="1" height="1" fill="#888"/>
<rect x="3" y="1012" width="1" height="1" fill="#888"/><rect x="6" y="1012" width="1" height="1" fill="#888"/>
<rect x="981" y="990" width="1" height="1" fill="#888"/><rect x="983.5" y="990" width="1" height="1" fill="#888"/>
<rect x="981" y="993" width="1" height="1" fill="#888"/><rect x="983.5" y="993" width="1" height="1" fill="#888"/>
<rect x="981" y="996" width="1" height="1" fill="#888"/><rect x="983.5" y="996" width="1" height="1" fill="#888"/>
<rect x="981" y="999" width="1" height="1" fill="#888"/><rect x="983.5" y="999" width="1" height="1" fill="#888"/>
<rect x="981" y="1002" width="1" height="1" fill="#888"/><rect x="983.5" y="1002" width="1" height="1" fill="#888"/>
<rect x="981" y="1005" width="1" height="1" fill="#888"/><rect x="983.5" y="1005" width="1" height="1" fill="#888"/>
<rect x="981" y="1008" width="1" height="1" fill="#888"/><rect x="983.5" y="1008" width="1" height="1" fill="#888"/>
<rect x="981" y="1011" width="1" height="1" fill="#888"/><rect x="983.5" y="1011" width="1" height="1" fill="#888"/>
<g transform="translate(1729.5,914) scale(1.2)"><rect x="0" y="0" width="1.8" height="11" fill="#c8c8c8"/><path d="M7,0 L2,5.5 L7,11Z M13,0 L8,5.5 L13,11Z" fill="#c8c8c8"/></g>
<g transform="translate(1756,914) scale(1.2)"><rect x="0" y="0" width="1.8" height="11" fill="#c8c8c8"/><path d="M10,0 L3,5.5 L10,11Z" fill="#c8c8c8"/></g>
<g transform="translate(1778,914) scale(1.2)"><rect x="0" y="-1" width="2.2" height="13" fill="#e8863a"/><path d="M12,0 L4,5.5 L12,11Z" fill="#c8c8c8"/></g>
<g transform="translate(1801,914) scale(1.2)"><path d="M9.5,0 L1,5.5 L9.5,11Z" fill="#c8c8c8"/></g>
<g transform="translate(1824,914) scale(1.2)"><path d="M1,0 L10,5.5 L1,11Z" fill="#c8c8c8"/></g>
<g transform="translate(1847,914) scale(1.2)"><path d="M0,0 L8,5.5 L0,11Z" fill="#c8c8c8"/><rect x="9" y="-1" width="2.2" height="13" fill="#e8863a"/></g>
<g transform="translate(1870,914) scale(1.2)"><path d="M0,0 L7,5.5 L0,11Z" fill="#c8c8c8"/><rect x="8.5" y="0" width="1.8" height="11" fill="#c8c8c8"/></g>
<g transform="translate(1891,914) scale(1.2)"><path d="M0,0 L5,5.5 L0,11Z M6,0 L11,5.5 L6,11Z" fill="#c8c8c8"/><rect x="12" y="0" width="1.8" height="11" fill="#c8c8c8"/></g>
<rect x="1321.2" y="958" width="1" height="19" fill="#8a8a8a"/><rect x="1320.2" y="962.8" width="3" height="9.5" rx="1" fill="#8a8a8a"/>
<g transform="translate(1338.75,956) scale(1)"><path d="M0,1 H7 V16 L3.5,12.5 L0,16Z" fill="#e8863a"/><path d="M9.5,0 V7 M6,3.5 H13" stroke="#eee" stroke-width="1.8"/></g>
<rect x="1365.0" y="958" width="1" height="19" fill="#8a8a8a"/><rect x="1364.0" y="962.8" width="3" height="9.5" rx="1" fill="#8a8a8a"/>
<path d="M1381,964 H1390 L1385.5,970Z" fill="none" stroke="#999" stroke-width="1"/><path d="M1510,964 H1519.7 L1514.8,970Z" fill="none" stroke="#999" stroke-width="1"/>
<rect x="1638.0" y="958" width="1" height="19" fill="#8a8a8a"/><rect x="1637.0" y="962.8" width="3" height="9.5" rx="1" fill="#8a8a8a"/>
<path d="M1732,963 L1742,963 L1737.0,968.5Z" fill="#c8c8c8"/>
<g transform="translate(1760.8,959) scale(1)"><path d="M3,5 Q3,1.5 7,1.5 H13 M14,11 Q14,14.5 10,14.5 H4" fill="none" stroke="#c8c8c8" stroke-width="1.8"/><path d="M12,-1 L16,1.5 L12,4Z M5,12 L1,14.5 L5,17Z" fill="#c8c8c8"/></g>
<g transform="translate(1789.6,957) scale(1)"><rect x="0.7" y="6" width="15" height="10" fill="none" stroke="#e8863a" stroke-width="1.4"/><path d="M1,9 H15.5 M1,13 H15.5" stroke="#e8863a" stroke-width="1" stroke-dasharray="2,1.5"/><path d="M10,0 L15,4 L10,6Z" fill="#c8c8c8"/></g>
<rect x="1820.5" y="958" width="1" height="19" fill="#8a8a8a"/><rect x="1819.5" y="962.8" width="3" height="9.5" rx="1" fill="#8a8a8a"/>
<g transform="translate(1834,958.5) scale(1)"><path d="M0,5 H3.5 L8,1 V15 L3.5,11 H0Z" fill="#c8c8c8"/><path d="M10.5,4.5 Q12.5,8 10.5,11.5 M13.5,2.5 Q16.5,8 13.5,13.5" fill="none" stroke="#c8c8c8" stroke-width="1.3"/></g>
<rect x="1860.3" y="955.2" width="22.100000000000136" height="21.799999999999955" fill="#cc3333"/>
<g transform="translate(1863.5,958) scale(1)"><circle cx="8" cy="8" r="6.5" fill="none" stroke="#eee" stroke-width="1.8"/><rect x="7" y="3.5" width="2" height="9" fill="#cc3333"/><rect x="7.3" y="4" width="1.4" height="8" fill="#eee"/><path d="M3,2 L1,0.5 M13,14 L15,15.5" stroke="#eee" stroke-width="1.5"/></g>
<g transform="translate(1889.9,956.5) scale(1)"><circle cx="3.5" cy="3.5" r="2.5" fill="none" stroke="#c8c8c8" stroke-width="1.3"/><circle cx="12.5" cy="6" r="2" fill="#e8863a"/><path d="M11,8.5 L8,13 L12,15 L11,19 M9.5,11 L5,13 M10,9.5 L15,12 L17,10 M8,13 L5,17" fill="none" stroke="#e8863a" stroke-width="2"/></g>
<rect x="1383" y="992" width="1" height="1" fill="#888"/>
<rect x="1383" y="995" width="1" height="1" fill="#888"/>
<rect x="1383" y="998" width="1" height="1" fill="#888"/>
<rect x="1383" y="1001" width="1" height="1" fill="#888"/>
<rect x="1383" y="1004" width="1" height="1" fill="#888"/>
<rect x="1383" y="1007" width="1" height="1" fill="#888"/>
<rect x="1383" y="1010" width="1" height="1" fill="#888"/>
<circle cx="22" cy="1002" r="8" fill="#8a8a8a"/><text x="22" y="1007" font-size="13" font-weight="bold" fill="#444" text-anchor="middle">?</text>
<g transform="translate(1893,992.8) scale(1)"><rect x="0.5" y="0.5" width="18" height="18" fill="#ccc"/><rect x="0.5" y="0.5" width="18" height="3" fill="#ccc"/><path d="M1.5,2 H17.5" stroke="#777" stroke-dasharray="1.2,1"/><text x="9.5" y="15.5" font-size="10" font-weight="bold" fill="#444" text-anchor="middle">{;}</text></g>
<text x="0" y="0" font-size="10.5" fill="#a8a8a8" textLength="133.22" lengthAdjust="spacingAndGlyphs" transform="translate(1907.5,139.40) rotate(90)">Channel Box / Layer Editor</text>
<text x="0" y="0" font-size="10.5" fill="#f0f0f0" textLength="79.99" lengthAdjust="spacingAndGlyphs" transform="translate(1907.5,296.50) rotate(90)">Attribute Editor</text>
<text x="0" y="0" font-size="10.5" fill="#a8a8a8" textLength="86.97" lengthAdjust="spacingAndGlyphs" transform="translate(1907.5,401.00) rotate(90)">Modeling Toolkit</text>
<rect x="1919" y="224" width="2" height="11.5" fill="#eee"/>
</svg>
</body></html>
